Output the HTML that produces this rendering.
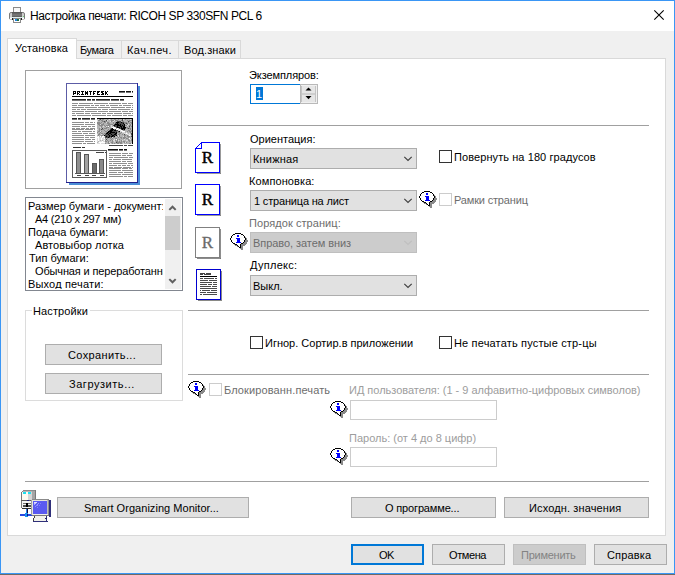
<!DOCTYPE html>
<html><head><meta charset="utf-8">
<style>
*{box-sizing:border-box;margin:0;padding:0}
html,body{width:675px;height:575px;overflow:hidden;background:#f0f0f0;font-family:"Liberation Sans",sans-serif;font-size:11px;color:#000;position:relative}
.a{position:absolute}
.t{position:absolute;white-space:nowrap;line-height:13px;height:13px}
.btn{position:absolute;background:#e1e1e1;border:1px solid #adadad}
.cmb{position:absolute;background:#e1e1e1;border:1px solid #adadad}
.chk{position:absolute;width:13px;height:13px;border:1px solid #333;background:#fff}
.chkd{position:absolute;width:13px;height:13px;border:1px solid #cccccc;background:#fff}
.sep{position:absolute;height:1px;background:#a0a0a0}
svg{position:absolute;overflow:visible}
</style></head><body>
<div class="a" style="left:1px;top:1px;width:673px;height:30px;background:#fff"></div>
<div class="a" style="left:0;top:0;width:675px;height:1px;background:#3a96f5"></div>
<div class="a" style="left:0;top:0;width:1px;height:574px;background:#3a96f5"></div>
<div class="a" style="left:674px;top:0;width:1px;height:574px;background:#3a96f5"></div>
<div class="a" style="left:0;top:573px;width:675px;height:1px;background:#3a96f5"></div>
<div class="a" style="left:0;top:574px;width:675px;height:1px;background:#6e6a66"></div>
<svg style="left:9px;top:7px" width="17" height="17" viewBox="0 0 17 17">
<defs><linearGradient id="pg" x1="0" y1="0" x2="0" y2="1"><stop offset="0" stop-color="#505050"/><stop offset="0.6" stop-color="#7c7c7c"/><stop offset="1" stop-color="#5a5a5a"/></linearGradient></defs>
<rect x="4.5" y="0.5" width="7" height="5.5" fill="#f8f8f8" stroke="#8a8a8a"/>
<rect x="0.5" y="5.5" width="15" height="7" rx="1.5" fill="#cfcfcf" stroke="#7a7a7a"/>
<rect x="3" y="5" width="10" height="5" fill="url(#pg)"/>
<rect x="14" y="9" width="1" height="1" fill="#70d070"/>
<rect x="1" y="10" width="14" height="1" fill="#e0eeee"/>
<rect x="1" y="11" width="14" height="1.5" fill="#fff"/>
<rect x="3" y="11" width="1" height="2" fill="#202020"/><rect x="12" y="11" width="1" height="2" fill="#202020"/>
<rect x="4.5" y="11.5" width="7" height="4" fill="#fff" stroke="#8a8a8a"/>
<rect x="6" y="12" width="2" height="2" fill="#2080e0"/><rect x="8" y="12" width="2" height="2" fill="#207040"/>
</svg>
<div class="t" style="left:30px;top:9px;letter-spacing:-0.421px;font-size:12px;line-height:14px;height:14px">Настройка печати: RICOH SP 330SFN PCL 6</div>
<svg style="left:654px;top:10px" width="11" height="11" viewBox="0 0 11 11"><path d="M0.3 0.3L9.7 9.7M9.7 0.3L0.3 9.7" stroke="#000" stroke-width="1.1"/></svg>
<div class="a" style="left:76px;top:40px;width:165px;height:19px;background:#f0f0f0;border:1px solid #d9d9d9"></div>
<div class="a" style="left:121px;top:40px;width:1px;height:18px;background:#d9d9d9"></div>
<div class="a" style="left:178px;top:40px;width:1px;height:18px;background:#d9d9d9"></div>
<div class="a" style="left:7px;top:58px;width:659px;height:478px;background:#fff;border:1px solid #d9d9d9"></div>
<div class="a" style="left:7px;top:38px;width:70px;height:21px;background:#fff;border:1px solid #d9d9d9;border-bottom:none"></div>
<div class="t" style="left:15px;top:42px;letter-spacing:0.125px">Установка</div>
<div class="t" style="left:80px;top:44px;letter-spacing:-0.4px">Бумага</div>
<div class="t" style="left:127px;top:44px;letter-spacing:0.429px">Кач.печ.</div>
<div class="t" style="left:184px;top:44px;letter-spacing:0.125px">Вод.знаки</div>
<div class="a" style="left:25px;top:70px;width:157px;height:119px;border:1px solid #a0a0a0;background:#fff"></div>
<svg style="left:66px;top:83px" width="75" height="103" viewBox="66 83 75 103" shape-rendering="crispEdges"><rect x="138" y="86" width="2" height="99" fill="#4a8ed6"/><rect x="69" y="183" width="71" height="2" fill="#4a8ed6"/><rect x="66" y="83" width="72" height="100" fill="#fff"/><rect x="66" y="83" width="72" height="1" fill="#5c5ca6"/><rect x="66" y="83" width="1" height="100" fill="#5c5ca6"/><rect x="137" y="83" width="1" height="100" fill="#25259a"/><rect x="66" y="182" width="72" height="1" fill="#20208c"/><rect x="73" y="91" width="1" height="1" fill="#000"/><rect x="74" y="91" width="1" height="1" fill="#000"/><rect x="75" y="91" width="1" height="1" fill="#000"/><rect x="73" y="92" width="1" height="1" fill="#000"/><rect x="75" y="92" width="1" height="1" fill="#000"/><rect x="73" y="93" width="1" height="1" fill="#000"/><rect x="74" y="93" width="1" height="1" fill="#000"/><rect x="75" y="93" width="1" height="1" fill="#000"/><rect x="73" y="94" width="1" height="1" fill="#000"/><rect x="77" y="91" width="1" height="1" fill="#000"/><rect x="78" y="91" width="1" height="1" fill="#000"/><rect x="79" y="91" width="1" height="1" fill="#000"/><rect x="77" y="92" width="1" height="1" fill="#000"/><rect x="79" y="92" width="1" height="1" fill="#000"/><rect x="77" y="93" width="1" height="1" fill="#000"/><rect x="78" y="93" width="1" height="1" fill="#000"/><rect x="77" y="94" width="1" height="1" fill="#000"/><rect x="79" y="94" width="1" height="1" fill="#000"/><rect x="81" y="91" width="1" height="1" fill="#000"/><rect x="82" y="91" width="1" height="1" fill="#000"/><rect x="83" y="91" width="1" height="1" fill="#000"/><rect x="82" y="92" width="1" height="1" fill="#000"/><rect x="82" y="93" width="1" height="1" fill="#000"/><rect x="81" y="94" width="1" height="1" fill="#000"/><rect x="82" y="94" width="1" height="1" fill="#000"/><rect x="83" y="94" width="1" height="1" fill="#000"/><rect x="85" y="91" width="1" height="1" fill="#000"/><rect x="87" y="91" width="1" height="1" fill="#000"/><rect x="85" y="92" width="1" height="1" fill="#000"/><rect x="86" y="92" width="1" height="1" fill="#000"/><rect x="87" y="92" width="1" height="1" fill="#000"/><rect x="85" y="93" width="1" height="1" fill="#000"/><rect x="86" y="93" width="1" height="1" fill="#000"/><rect x="87" y="93" width="1" height="1" fill="#000"/><rect x="85" y="94" width="1" height="1" fill="#000"/><rect x="87" y="94" width="1" height="1" fill="#000"/><rect x="89" y="91" width="1" height="1" fill="#000"/><rect x="90" y="91" width="1" height="1" fill="#000"/><rect x="91" y="91" width="1" height="1" fill="#000"/><rect x="90" y="92" width="1" height="1" fill="#000"/><rect x="90" y="93" width="1" height="1" fill="#000"/><rect x="90" y="94" width="1" height="1" fill="#000"/><rect x="93" y="91" width="1" height="1" fill="#000"/><rect x="94" y="91" width="1" height="1" fill="#000"/><rect x="95" y="91" width="1" height="1" fill="#000"/><rect x="93" y="92" width="1" height="1" fill="#000"/><rect x="93" y="93" width="1" height="1" fill="#000"/><rect x="94" y="93" width="1" height="1" fill="#000"/><rect x="93" y="94" width="1" height="1" fill="#000"/><rect x="97" y="91" width="1" height="1" fill="#000"/><rect x="98" y="91" width="1" height="1" fill="#000"/><rect x="99" y="91" width="1" height="1" fill="#000"/><rect x="97" y="92" width="1" height="1" fill="#000"/><rect x="98" y="92" width="1" height="1" fill="#000"/><rect x="97" y="93" width="1" height="1" fill="#000"/><rect x="97" y="94" width="1" height="1" fill="#000"/><rect x="98" y="94" width="1" height="1" fill="#000"/><rect x="99" y="94" width="1" height="1" fill="#000"/><rect x="101" y="91" width="1" height="1" fill="#000"/><rect x="102" y="91" width="1" height="1" fill="#000"/><rect x="103" y="91" width="1" height="1" fill="#000"/><rect x="101" y="92" width="1" height="1" fill="#000"/><rect x="102" y="92" width="1" height="1" fill="#000"/><rect x="102" y="93" width="1" height="1" fill="#000"/><rect x="103" y="93" width="1" height="1" fill="#000"/><rect x="101" y="94" width="1" height="1" fill="#000"/><rect x="102" y="94" width="1" height="1" fill="#000"/><rect x="103" y="94" width="1" height="1" fill="#000"/><rect x="105" y="91" width="1" height="1" fill="#000"/><rect x="107" y="91" width="1" height="1" fill="#000"/><rect x="105" y="92" width="1" height="1" fill="#000"/><rect x="106" y="92" width="1" height="1" fill="#000"/><rect x="105" y="93" width="1" height="1" fill="#000"/><rect x="106" y="93" width="1" height="1" fill="#000"/><rect x="105" y="94" width="1" height="1" fill="#000"/><rect x="107" y="94" width="1" height="1" fill="#000"/><rect x="119" y="91" width="6" height="1" fill="#111"/><rect x="119" y="92" width="6" height="1" fill="#777"/><rect x="126" y="91" width="5" height="1" fill="#111"/><rect x="126" y="92" width="5" height="1" fill="#777"/><rect x="132" y="91" width="1" height="1" fill="#111"/><rect x="132" y="92" width="1" height="1" fill="#777"/><rect x="72" y="96" width="61" height="1" fill="#000"/><rect x="72" y="99" width="14" height="1" fill="#222"/><rect x="72" y="100" width="14" height="1" fill="#777"/><rect x="87" y="99" width="4" height="1" fill="#222"/><rect x="87" y="100" width="4" height="1" fill="#777"/><rect x="92" y="99" width="3" height="1" fill="#222"/><rect x="92" y="100" width="3" height="1" fill="#777"/><rect x="96" y="99" width="14" height="1" fill="#222"/><rect x="96" y="100" width="14" height="1" fill="#777"/><rect x="111" y="99" width="8" height="1" fill="#222"/><rect x="111" y="100" width="8" height="1" fill="#777"/><rect x="120" y="99" width="4" height="1" fill="#222"/><rect x="120" y="100" width="4" height="1" fill="#777"/><rect x="72" y="103" width="6" height="1" fill="#8e8e8e"/><rect x="79" y="103" width="14" height="1" fill="#8e8e8e"/><rect x="94" y="103" width="14" height="1" fill="#8e8e8e"/><rect x="109" y="103" width="12" height="1" fill="#8e8e8e"/><rect x="122" y="103" width="5" height="1" fill="#8e8e8e"/><rect x="128" y="103" width="5" height="1" fill="#8e8e8e"/><rect x="72" y="105" width="5" height="1" fill="#8e8e8e"/><rect x="78" y="105" width="12" height="1" fill="#8e8e8e"/><rect x="91" y="105" width="3" height="1" fill="#8e8e8e"/><rect x="95" y="105" width="4" height="1" fill="#8e8e8e"/><rect x="100" y="105" width="5" height="1" fill="#8e8e8e"/><rect x="106" y="105" width="3" height="1" fill="#8e8e8e"/><rect x="110" y="105" width="8" height="1" fill="#8e8e8e"/><rect x="119" y="105" width="3" height="1" fill="#8e8e8e"/><rect x="123" y="105" width="8" height="1" fill="#8e8e8e"/><rect x="132" y="105" width="1" height="1" fill="#8e8e8e"/><rect x="72" y="107" width="12" height="1" fill="#8e8e8e"/><rect x="85" y="107" width="12" height="1" fill="#8e8e8e"/><rect x="98" y="107" width="12" height="1" fill="#8e8e8e"/><rect x="111" y="107" width="14" height="1" fill="#8e8e8e"/><rect x="126" y="107" width="5" height="1" fill="#8e8e8e"/><rect x="132" y="107" width="1" height="1" fill="#8e8e8e"/><rect x="72" y="109" width="4" height="1" fill="#8e8e8e"/><rect x="77" y="109" width="3" height="1" fill="#8e8e8e"/><rect x="81" y="109" width="5" height="1" fill="#8e8e8e"/><rect x="87" y="109" width="14" height="1" fill="#8e8e8e"/><rect x="102" y="109" width="6" height="1" fill="#8e8e8e"/><rect x="109" y="109" width="8" height="1" fill="#8e8e8e"/><rect x="118" y="109" width="12" height="1" fill="#8e8e8e"/><rect x="131" y="109" width="2" height="1" fill="#8e8e8e"/><rect x="72" y="111" width="12" height="1" fill="#8e8e8e"/><rect x="85" y="111" width="12" height="1" fill="#8e8e8e"/><rect x="98" y="111" width="10" height="1" fill="#8e8e8e"/><rect x="109" y="111" width="12" height="1" fill="#8e8e8e"/><rect x="122" y="111" width="6" height="1" fill="#8e8e8e"/><rect x="129" y="111" width="4" height="1" fill="#8e8e8e"/><rect x="72" y="113" width="3" height="1" fill="#8e8e8e"/><rect x="76" y="113" width="8" height="1" fill="#8e8e8e"/><rect x="85" y="113" width="5" height="1" fill="#8e8e8e"/><rect x="91" y="113" width="10" height="1" fill="#8e8e8e"/><rect x="102" y="113" width="4" height="1" fill="#8e8e8e"/><rect x="107" y="113" width="6" height="1" fill="#8e8e8e"/><rect x="114" y="113" width="8" height="1" fill="#8e8e8e"/><rect x="123" y="113" width="8" height="1" fill="#8e8e8e"/><rect x="132" y="113" width="1" height="1" fill="#8e8e8e"/><rect x="72" y="115" width="4" height="1" fill="#8e8e8e"/><rect x="77" y="115" width="14" height="1" fill="#8e8e8e"/><rect x="92" y="115" width="14" height="1" fill="#8e8e8e"/><rect x="107" y="115" width="4" height="1" fill="#8e8e8e"/><rect x="112" y="115" width="10" height="1" fill="#8e8e8e"/><rect x="123" y="115" width="4" height="1" fill="#8e8e8e"/><rect x="128" y="115" width="5" height="1" fill="#8e8e8e"/><rect x="72" y="118" width="5" height="1" fill="#222"/><rect x="72" y="119" width="5" height="1" fill="#777"/><rect x="78" y="118" width="3" height="1" fill="#222"/><rect x="78" y="119" width="3" height="1" fill="#777"/><rect x="82" y="118" width="8" height="1" fill="#222"/><rect x="82" y="119" width="8" height="1" fill="#777"/><rect x="91" y="118" width="4" height="1" fill="#222"/><rect x="91" y="119" width="4" height="1" fill="#777"/><rect x="72" y="122" width="12" height="1" fill="#8e8e8e"/><rect x="85" y="122" width="4" height="1" fill="#8e8e8e"/><rect x="90" y="122" width="3" height="1" fill="#8e8e8e"/><rect x="94" y="122" width="1" height="1" fill="#8e8e8e"/><rect x="72" y="124" width="12" height="1" fill="#8e8e8e"/><rect x="85" y="124" width="10" height="1" fill="#8e8e8e"/><rect x="72" y="126" width="8" height="1" fill="#8e8e8e"/><rect x="81" y="126" width="6" height="1" fill="#8e8e8e"/><rect x="88" y="126" width="3" height="1" fill="#8e8e8e"/><rect x="92" y="126" width="3" height="1" fill="#8e8e8e"/><rect x="72" y="128" width="3" height="1" fill="#8e8e8e"/><rect x="76" y="128" width="4" height="1" fill="#8e8e8e"/><rect x="81" y="128" width="4" height="1" fill="#8e8e8e"/><rect x="86" y="128" width="3" height="1" fill="#8e8e8e"/><rect x="90" y="128" width="5" height="1" fill="#8e8e8e"/><rect x="72" y="129" width="12" height="1" fill="#8e8e8e"/><rect x="85" y="129" width="8" height="1" fill="#8e8e8e"/><rect x="94" y="129" width="1" height="1" fill="#8e8e8e"/><rect x="72" y="131" width="5" height="1" fill="#8e8e8e"/><rect x="78" y="131" width="3" height="1" fill="#8e8e8e"/><rect x="82" y="131" width="10" height="1" fill="#8e8e8e"/><rect x="93" y="131" width="2" height="1" fill="#8e8e8e"/><rect x="72" y="133" width="10" height="1" fill="#8e8e8e"/><rect x="83" y="133" width="5" height="1" fill="#8e8e8e"/><rect x="89" y="133" width="6" height="1" fill="#8e8e8e"/><rect x="72" y="135" width="12" height="1" fill="#8e8e8e"/><rect x="85" y="135" width="10" height="1" fill="#8e8e8e"/><rect x="72" y="137" width="12" height="1" fill="#8e8e8e"/><rect x="85" y="137" width="4" height="1" fill="#8e8e8e"/><rect x="90" y="137" width="5" height="1" fill="#8e8e8e"/><rect x="72" y="139" width="12" height="1" fill="#8e8e8e"/><rect x="85" y="139" width="6" height="1" fill="#8e8e8e"/><rect x="92" y="139" width="3" height="1" fill="#8e8e8e"/><rect x="72" y="141" width="12" height="1" fill="#8e8e8e"/><rect x="85" y="141" width="8" height="1" fill="#8e8e8e"/><rect x="94" y="141" width="1" height="1" fill="#8e8e8e"/><rect x="72" y="143" width="10" height="1" fill="#8e8e8e"/><rect x="83" y="143" width="3" height="1" fill="#8e8e8e"/><rect x="87" y="143" width="8" height="1" fill="#8e8e8e"/><rect x="97" y="118" width="2" height="1" fill="#8a8a8a"/><rect x="99" y="118" width="1" height="1" fill="#b4b4b4"/><rect x="100" y="118" width="1" height="1" fill="#4a4a4a"/><rect x="101" y="118" width="1" height="1" fill="#b4b4b4"/><rect x="102" y="118" width="1" height="1" fill="#4a4a4a"/><rect x="103" y="118" width="3" height="1" fill="#b4b4b4"/><rect x="106" y="118" width="1" height="1" fill="#8a8a8a"/><rect x="107" y="118" width="1" height="1" fill="#b4b4b4"/><rect x="108" y="118" width="2" height="1" fill="#8a8a8a"/><rect x="110" y="118" width="1" height="1" fill="#b4b4b4"/><rect x="111" y="118" width="2" height="1" fill="#8a8a8a"/><rect x="113" y="118" width="2" height="1" fill="#b4b4b4"/><rect x="115" y="118" width="1" height="1" fill="#8a8a8a"/><rect x="116" y="118" width="1" height="1" fill="#dcdcdc"/><rect x="117" y="118" width="1" height="1" fill="#b4b4b4"/><rect x="118" y="118" width="1" height="1" fill="#8a8a8a"/><rect x="119" y="118" width="1" height="1" fill="#b4b4b4"/><rect x="120" y="118" width="3" height="1" fill="#8a8a8a"/><rect x="123" y="118" width="1" height="1" fill="#dcdcdc"/><rect x="124" y="118" width="3" height="1" fill="#b4b4b4"/><rect x="127" y="118" width="1" height="1" fill="#dcdcdc"/><rect x="128" y="118" width="2" height="1" fill="#8a8a8a"/><rect x="130" y="118" width="1" height="1" fill="#dcdcdc"/><rect x="131" y="118" width="2" height="1" fill="#8a8a8a"/><rect x="97" y="119" width="1" height="1" fill="#b4b4b4"/><rect x="98" y="119" width="1" height="1" fill="#dcdcdc"/><rect x="99" y="119" width="1" height="1" fill="#8a8a8a"/><rect x="100" y="119" width="1" height="1" fill="#4a4a4a"/><rect x="101" y="119" width="1" height="1" fill="#b4b4b4"/><rect x="102" y="119" width="2" height="1" fill="#8a8a8a"/><rect x="104" y="119" width="3" height="1" fill="#b4b4b4"/><rect x="107" y="119" width="1" height="1" fill="#8a8a8a"/><rect x="108" y="119" width="1" height="1" fill="#b4b4b4"/><rect x="109" y="119" width="1" height="1" fill="#dcdcdc"/><rect x="110" y="119" width="1" height="1" fill="#b4b4b4"/><rect x="111" y="119" width="1" height="1" fill="#8a8a8a"/><rect x="112" y="119" width="2" height="1" fill="#b4b4b4"/><rect x="114" y="119" width="2" height="1" fill="#8a8a8a"/><rect x="116" y="119" width="2" height="1" fill="#b4b4b4"/><rect x="118" y="119" width="1" height="1" fill="#8a8a8a"/><rect x="119" y="119" width="3" height="1" fill="#b4b4b4"/><rect x="122" y="119" width="1" height="1" fill="#4a4a4a"/><rect x="123" y="119" width="1" height="1" fill="#dcdcdc"/><rect x="124" y="119" width="1" height="1" fill="#b4b4b4"/><rect x="125" y="119" width="1" height="1" fill="#8a8a8a"/><rect x="126" y="119" width="4" height="1" fill="#b4b4b4"/><rect x="130" y="119" width="1" height="1" fill="#dcdcdc"/><rect x="131" y="119" width="1" height="1" fill="#b4b4b4"/><rect x="132" y="119" width="1" height="1" fill="#dcdcdc"/><rect x="97" y="120" width="1" height="1" fill="#dcdcdc"/><rect x="98" y="120" width="2" height="1" fill="#8a8a8a"/><rect x="100" y="120" width="1" height="1" fill="#b4b4b4"/><rect x="101" y="120" width="2" height="1" fill="#8a8a8a"/><rect x="103" y="120" width="3" height="1" fill="#b4b4b4"/><rect x="106" y="120" width="1" height="1" fill="#4a4a4a"/><rect x="107" y="120" width="1" height="1" fill="#dcdcdc"/><rect x="108" y="120" width="3" height="1" fill="#b4b4b4"/><rect x="111" y="120" width="3" height="1" fill="#8a8a8a"/><rect x="114" y="120" width="1" height="1" fill="#dcdcdc"/><rect x="115" y="120" width="3" height="1" fill="#8a8a8a"/><rect x="118" y="120" width="3" height="1" fill="#b4b4b4"/><rect x="121" y="120" width="1" height="1" fill="#8a8a8a"/><rect x="122" y="120" width="1" height="1" fill="#4a4a4a"/><rect x="123" y="120" width="4" height="1" fill="#b4b4b4"/><rect x="127" y="120" width="1" height="1" fill="#8a8a8a"/><rect x="128" y="120" width="1" height="1" fill="#b4b4b4"/><rect x="129" y="120" width="3" height="1" fill="#8a8a8a"/><rect x="132" y="120" width="1" height="1" fill="#b4b4b4"/><rect x="97" y="121" width="1" height="1" fill="#dcdcdc"/><rect x="98" y="121" width="4" height="1" fill="#b4b4b4"/><rect x="102" y="121" width="2" height="1" fill="#8a8a8a"/><rect x="104" y="121" width="1" height="1" fill="#4a4a4a"/><rect x="105" y="121" width="2" height="1" fill="#8a8a8a"/><rect x="107" y="121" width="3" height="1" fill="#b4b4b4"/><rect x="110" y="121" width="1" height="1" fill="#dcdcdc"/><rect x="111" y="121" width="1" height="1" fill="#8a8a8a"/><rect x="112" y="121" width="1" height="1" fill="#b4b4b4"/><rect x="113" y="121" width="1" height="1" fill="#dcdcdc"/><rect x="114" y="121" width="3" height="1" fill="#b4b4b4"/><rect x="117" y="121" width="4" height="1" fill="#4a4a4a"/><rect x="121" y="121" width="1" height="1" fill="#b4b4b4"/><rect x="122" y="121" width="2" height="1" fill="#8a8a8a"/><rect x="124" y="121" width="4" height="1" fill="#b4b4b4"/><rect x="128" y="121" width="1" height="1" fill="#4a4a4a"/><rect x="129" y="121" width="1" height="1" fill="#8a8a8a"/><rect x="130" y="121" width="2" height="1" fill="#b4b4b4"/><rect x="132" y="121" width="1" height="1" fill="#8a8a8a"/><rect x="97" y="122" width="3" height="1" fill="#8a8a8a"/><rect x="100" y="122" width="1" height="1" fill="#b4b4b4"/><rect x="101" y="122" width="1" height="1" fill="#8a8a8a"/><rect x="102" y="122" width="2" height="1" fill="#b4b4b4"/><rect x="104" y="122" width="2" height="1" fill="#8a8a8a"/><rect x="106" y="122" width="1" height="1" fill="#dcdcdc"/><rect x="107" y="122" width="2" height="1" fill="#8a8a8a"/><rect x="109" y="122" width="4" height="1" fill="#b4b4b4"/><rect x="113" y="122" width="1" height="1" fill="#8a8a8a"/><rect x="114" y="122" width="1" height="1" fill="#b4b4b4"/><rect x="115" y="122" width="1" height="1" fill="#8a8a8a"/><rect x="116" y="122" width="3" height="1" fill="#000000"/><rect x="119" y="122" width="2" height="1" fill="#4a4a4a"/><rect x="121" y="122" width="1" height="1" fill="#000000"/><rect x="122" y="122" width="2" height="1" fill="#4a4a4a"/><rect x="124" y="122" width="3" height="1" fill="#8a8a8a"/><rect x="127" y="122" width="1" height="1" fill="#b4b4b4"/><rect x="128" y="122" width="1" height="1" fill="#8a8a8a"/><rect x="129" y="122" width="1" height="1" fill="#b4b4b4"/><rect x="130" y="122" width="3" height="1" fill="#8a8a8a"/><rect x="97" y="123" width="4" height="1" fill="#8a8a8a"/><rect x="101" y="123" width="2" height="1" fill="#b4b4b4"/><rect x="103" y="123" width="1" height="1" fill="#8a8a8a"/><rect x="104" y="123" width="3" height="1" fill="#b4b4b4"/><rect x="107" y="123" width="3" height="1" fill="#8a8a8a"/><rect x="110" y="123" width="3" height="1" fill="#b4b4b4"/><rect x="113" y="123" width="1" height="1" fill="#8a8a8a"/><rect x="114" y="123" width="1" height="1" fill="#b4b4b4"/><rect x="115" y="123" width="2" height="1" fill="#4a4a4a"/><rect x="117" y="123" width="1" height="1" fill="#000000"/><rect x="118" y="123" width="5" height="1" fill="#4a4a4a"/><rect x="123" y="123" width="1" height="1" fill="#000000"/><rect x="124" y="123" width="2" height="1" fill="#8a8a8a"/><rect x="126" y="123" width="1" height="1" fill="#4a4a4a"/><rect x="127" y="123" width="1" height="1" fill="#8a8a8a"/><rect x="128" y="123" width="1" height="1" fill="#b4b4b4"/><rect x="129" y="123" width="1" height="1" fill="#8a8a8a"/><rect x="130" y="123" width="1" height="1" fill="#b4b4b4"/><rect x="131" y="123" width="2" height="1" fill="#8a8a8a"/><rect x="97" y="124" width="1" height="1" fill="#b4b4b4"/><rect x="98" y="124" width="2" height="1" fill="#8a8a8a"/><rect x="100" y="124" width="1" height="1" fill="#dcdcdc"/><rect x="101" y="124" width="3" height="1" fill="#8a8a8a"/><rect x="104" y="124" width="4" height="1" fill="#b4b4b4"/><rect x="108" y="124" width="5" height="1" fill="#8a8a8a"/><rect x="113" y="124" width="1" height="1" fill="#b4b4b4"/><rect x="114" y="124" width="1" height="1" fill="#4a4a4a"/><rect x="115" y="124" width="4" height="1" fill="#000000"/><rect x="119" y="124" width="1" height="1" fill="#4a4a4a"/><rect x="120" y="124" width="1" height="1" fill="#000000"/><rect x="121" y="124" width="3" height="1" fill="#4a4a4a"/><rect x="124" y="124" width="1" height="1" fill="#000000"/><rect x="125" y="124" width="2" height="1" fill="#b4b4b4"/><rect x="127" y="124" width="1" height="1" fill="#8a8a8a"/><rect x="128" y="124" width="1" height="1" fill="#dcdcdc"/><rect x="129" y="124" width="1" height="1" fill="#b4b4b4"/><rect x="130" y="124" width="1" height="1" fill="#8a8a8a"/><rect x="131" y="124" width="2" height="1" fill="#b4b4b4"/><rect x="97" y="125" width="2" height="1" fill="#b4b4b4"/><rect x="99" y="125" width="4" height="1" fill="#8a8a8a"/><rect x="103" y="125" width="1" height="1" fill="#b4b4b4"/><rect x="104" y="125" width="1" height="1" fill="#8a8a8a"/><rect x="105" y="125" width="1" height="1" fill="#b4b4b4"/><rect x="106" y="125" width="4" height="1" fill="#8a8a8a"/><rect x="110" y="125" width="1" height="1" fill="#b4b4b4"/><rect x="111" y="125" width="1" height="1" fill="#dcdcdc"/><rect x="112" y="125" width="1" height="1" fill="#b4b4b4"/><rect x="113" y="125" width="1" height="1" fill="#4a4a4a"/><rect x="114" y="125" width="1" height="1" fill="#000000"/><rect x="115" y="125" width="2" height="1" fill="#4a4a4a"/><rect x="117" y="125" width="4" height="1" fill="#000000"/><rect x="121" y="125" width="1" height="1" fill="#4a4a4a"/><rect x="122" y="125" width="1" height="1" fill="#000000"/><rect x="123" y="125" width="1" height="1" fill="#4a4a4a"/><rect x="124" y="125" width="1" height="1" fill="#000000"/><rect x="125" y="125" width="2" height="1" fill="#8a8a8a"/><rect x="127" y="125" width="1" height="1" fill="#dcdcdc"/><rect x="128" y="125" width="1" height="1" fill="#b4b4b4"/><rect x="129" y="125" width="2" height="1" fill="#8a8a8a"/><rect x="131" y="125" width="1" height="1" fill="#b4b4b4"/><rect x="132" y="125" width="1" height="1" fill="#8a8a8a"/><rect x="97" y="126" width="4" height="1" fill="#b4b4b4"/><rect x="101" y="126" width="1" height="1" fill="#8a8a8a"/><rect x="102" y="126" width="1" height="1" fill="#b4b4b4"/><rect x="103" y="126" width="1" height="1" fill="#dcdcdc"/><rect x="104" y="126" width="1" height="1" fill="#b4b4b4"/><rect x="105" y="126" width="1" height="1" fill="#8a8a8a"/><rect x="106" y="126" width="1" height="1" fill="#dcdcdc"/><rect x="107" y="126" width="1" height="1" fill="#b4b4b4"/><rect x="108" y="126" width="1" height="1" fill="#ffffff"/><rect x="109" y="126" width="1" height="1" fill="#8a8a8a"/><rect x="110" y="126" width="1" height="1" fill="#b4b4b4"/><rect x="111" y="126" width="1" height="1" fill="#dcdcdc"/><rect x="112" y="126" width="1" height="1" fill="#b4b4b4"/><rect x="113" y="126" width="1" height="1" fill="#dcdcdc"/><rect x="114" y="126" width="3" height="1" fill="#4a4a4a"/><rect x="117" y="126" width="1" height="1" fill="#000000"/><rect x="118" y="126" width="2" height="1" fill="#4a4a4a"/><rect x="120" y="126" width="2" height="1" fill="#000000"/><rect x="122" y="126" width="1" height="1" fill="#4a4a4a"/><rect x="123" y="126" width="2" height="1" fill="#000000"/><rect x="125" y="126" width="4" height="1" fill="#b4b4b4"/><rect x="129" y="126" width="1" height="1" fill="#4a4a4a"/><rect x="130" y="126" width="1" height="1" fill="#b4b4b4"/><rect x="131" y="126" width="2" height="1" fill="#8a8a8a"/><rect x="97" y="127" width="3" height="1" fill="#b4b4b4"/><rect x="100" y="127" width="1" height="1" fill="#dcdcdc"/><rect x="101" y="127" width="1" height="1" fill="#8a8a8a"/><rect x="102" y="127" width="4" height="1" fill="#b4b4b4"/><rect x="106" y="127" width="3" height="1" fill="#8a8a8a"/><rect x="109" y="127" width="2" height="1" fill="#b4b4b4"/><rect x="111" y="127" width="1" height="1" fill="#dcdcdc"/><rect x="112" y="127" width="3" height="1" fill="#ffffff"/><rect x="115" y="127" width="1" height="1" fill="#dcdcdc"/><rect x="116" y="127" width="1" height="1" fill="#4a4a4a"/><rect x="117" y="127" width="3" height="1" fill="#000000"/><rect x="120" y="127" width="1" height="1" fill="#4a4a4a"/><rect x="121" y="127" width="1" height="1" fill="#000000"/><rect x="122" y="127" width="1" height="1" fill="#4a4a4a"/><rect x="123" y="127" width="3" height="1" fill="#000000"/><rect x="126" y="127" width="2" height="1" fill="#8a8a8a"/><rect x="128" y="127" width="1" height="1" fill="#b4b4b4"/><rect x="129" y="127" width="1" height="1" fill="#8a8a8a"/><rect x="130" y="127" width="3" height="1" fill="#b4b4b4"/><rect x="97" y="128" width="2" height="1" fill="#b4b4b4"/><rect x="99" y="128" width="1" height="1" fill="#8a8a8a"/><rect x="100" y="128" width="2" height="1" fill="#b4b4b4"/><rect x="102" y="128" width="1" height="1" fill="#4a4a4a"/><rect x="103" y="128" width="1" height="1" fill="#b4b4b4"/><rect x="104" y="128" width="3" height="1" fill="#8a8a8a"/><rect x="107" y="128" width="3" height="1" fill="#b4b4b4"/><rect x="110" y="128" width="1" height="1" fill="#8a8a8a"/><rect x="111" y="128" width="1" height="1" fill="#4a4a4a"/><rect x="112" y="128" width="1" height="1" fill="#000000"/><rect x="113" y="128" width="3" height="1" fill="#ffffff"/><rect x="116" y="128" width="1" height="1" fill="#b4b4b4"/><rect x="117" y="128" width="1" height="1" fill="#ffffff"/><rect x="118" y="128" width="1" height="1" fill="#dcdcdc"/><rect x="119" y="128" width="2" height="1" fill="#4a4a4a"/><rect x="121" y="128" width="4" height="1" fill="#000000"/><rect x="125" y="128" width="1" height="1" fill="#4a4a4a"/><rect x="126" y="128" width="1" height="1" fill="#b4b4b4"/><rect x="127" y="128" width="1" height="1" fill="#8a8a8a"/><rect x="128" y="128" width="1" height="1" fill="#4a4a4a"/><rect x="129" y="128" width="2" height="1" fill="#8a8a8a"/><rect x="131" y="128" width="2" height="1" fill="#b4b4b4"/><rect x="97" y="129" width="1" height="1" fill="#dcdcdc"/><rect x="98" y="129" width="1" height="1" fill="#b4b4b4"/><rect x="99" y="129" width="1" height="1" fill="#8a8a8a"/><rect x="100" y="129" width="1" height="1" fill="#b4b4b4"/><rect x="101" y="129" width="1" height="1" fill="#4a4a4a"/><rect x="102" y="129" width="2" height="1" fill="#8a8a8a"/><rect x="104" y="129" width="4" height="1" fill="#b4b4b4"/><rect x="108" y="129" width="1" height="1" fill="#8a8a8a"/><rect x="109" y="129" width="1" height="1" fill="#b4b4b4"/><rect x="110" y="129" width="1" height="1" fill="#4a4a4a"/><rect x="111" y="129" width="3" height="1" fill="#000000"/><rect x="114" y="129" width="1" height="1" fill="#8a8a8a"/><rect x="115" y="129" width="1" height="1" fill="#4a4a4a"/><rect x="116" y="129" width="2" height="1" fill="#ffffff"/><rect x="118" y="129" width="1" height="1" fill="#dcdcdc"/><rect x="119" y="129" width="1" height="1" fill="#ffffff"/><rect x="120" y="129" width="1" height="1" fill="#dcdcdc"/><rect x="121" y="129" width="1" height="1" fill="#4a4a4a"/><rect x="122" y="129" width="1" height="1" fill="#000000"/><rect x="123" y="129" width="1" height="1" fill="#4a4a4a"/><rect x="124" y="129" width="1" height="1" fill="#000000"/><rect x="125" y="129" width="5" height="1" fill="#b4b4b4"/><rect x="130" y="129" width="1" height="1" fill="#8a8a8a"/><rect x="131" y="129" width="2" height="1" fill="#b4b4b4"/><rect x="97" y="130" width="2" height="1" fill="#b4b4b4"/><rect x="99" y="130" width="1" height="1" fill="#8a8a8a"/><rect x="100" y="130" width="4" height="1" fill="#b4b4b4"/><rect x="104" y="130" width="1" height="1" fill="#8a8a8a"/><rect x="105" y="130" width="2" height="1" fill="#b4b4b4"/><rect x="107" y="130" width="1" height="1" fill="#8a8a8a"/><rect x="108" y="130" width="1" height="1" fill="#b4b4b4"/><rect x="109" y="130" width="1" height="1" fill="#4a4a4a"/><rect x="110" y="130" width="3" height="1" fill="#000000"/><rect x="113" y="130" width="1" height="1" fill="#4a4a4a"/><rect x="114" y="130" width="2" height="1" fill="#000000"/><rect x="116" y="130" width="2" height="1" fill="#4a4a4a"/><rect x="118" y="130" width="3" height="1" fill="#dcdcdc"/><rect x="121" y="130" width="1" height="1" fill="#ffffff"/><rect x="122" y="130" width="1" height="1" fill="#dcdcdc"/><rect x="123" y="130" width="2" height="1" fill="#8a8a8a"/><rect x="125" y="130" width="3" height="1" fill="#b4b4b4"/><rect x="128" y="130" width="2" height="1" fill="#8a8a8a"/><rect x="130" y="130" width="1" height="1" fill="#b4b4b4"/><rect x="131" y="130" width="2" height="1" fill="#8a8a8a"/><rect x="97" y="131" width="1" height="1" fill="#b4b4b4"/><rect x="98" y="131" width="2" height="1" fill="#8a8a8a"/><rect x="100" y="131" width="1" height="1" fill="#dcdcdc"/><rect x="101" y="131" width="1" height="1" fill="#8a8a8a"/><rect x="102" y="131" width="3" height="1" fill="#b4b4b4"/><rect x="105" y="131" width="2" height="1" fill="#8a8a8a"/><rect x="107" y="131" width="1" height="1" fill="#b4b4b4"/><rect x="108" y="131" width="4" height="1" fill="#000000"/><rect x="112" y="131" width="5" height="1" fill="#4a4a4a"/><rect x="117" y="131" width="1" height="1" fill="#8a8a8a"/><rect x="118" y="131" width="1" height="1" fill="#4a4a4a"/><rect x="119" y="131" width="1" height="1" fill="#000000"/><rect x="120" y="131" width="2" height="1" fill="#dcdcdc"/><rect x="122" y="131" width="3" height="1" fill="#ffffff"/><rect x="125" y="131" width="2" height="1" fill="#b4b4b4"/><rect x="127" y="131" width="1" height="1" fill="#8a8a8a"/><rect x="128" y="131" width="1" height="1" fill="#b4b4b4"/><rect x="129" y="131" width="4" height="1" fill="#8a8a8a"/><rect x="97" y="132" width="1" height="1" fill="#8a8a8a"/><rect x="98" y="132" width="2" height="1" fill="#b4b4b4"/><rect x="100" y="132" width="1" height="1" fill="#8a8a8a"/><rect x="101" y="132" width="5" height="1" fill="#b4b4b4"/><rect x="106" y="132" width="1" height="1" fill="#8a8a8a"/><rect x="107" y="132" width="2" height="1" fill="#000000"/><rect x="109" y="132" width="1" height="1" fill="#4a4a4a"/><rect x="110" y="132" width="5" height="1" fill="#000000"/><rect x="115" y="132" width="1" height="1" fill="#4a4a4a"/><rect x="116" y="132" width="1" height="1" fill="#000000"/><rect x="117" y="132" width="3" height="1" fill="#8a8a8a"/><rect x="120" y="132" width="1" height="1" fill="#b4b4b4"/><rect x="121" y="132" width="1" height="1" fill="#8a8a8a"/><rect x="122" y="132" width="3" height="1" fill="#dcdcdc"/><rect x="125" y="132" width="1" height="1" fill="#b4b4b4"/><rect x="126" y="132" width="1" height="1" fill="#dcdcdc"/><rect x="127" y="132" width="3" height="1" fill="#b4b4b4"/><rect x="130" y="132" width="1" height="1" fill="#8a8a8a"/><rect x="131" y="132" width="1" height="1" fill="#b4b4b4"/><rect x="132" y="132" width="1" height="1" fill="#8a8a8a"/><rect x="97" y="133" width="2" height="1" fill="#b4b4b4"/><rect x="99" y="133" width="1" height="1" fill="#8a8a8a"/><rect x="100" y="133" width="1" height="1" fill="#b4b4b4"/><rect x="101" y="133" width="2" height="1" fill="#8a8a8a"/><rect x="103" y="133" width="1" height="1" fill="#b4b4b4"/><rect x="104" y="133" width="2" height="1" fill="#8a8a8a"/><rect x="106" y="133" width="2" height="1" fill="#000000"/><rect x="108" y="133" width="1" height="1" fill="#4a4a4a"/><rect x="109" y="133" width="2" height="1" fill="#000000"/><rect x="111" y="133" width="4" height="1" fill="#4a4a4a"/><rect x="115" y="133" width="2" height="1" fill="#000000"/><rect x="117" y="133" width="2" height="1" fill="#b4b4b4"/><rect x="119" y="133" width="2" height="1" fill="#8a8a8a"/><rect x="121" y="133" width="3" height="1" fill="#b4b4b4"/><rect x="124" y="133" width="2" height="1" fill="#dcdcdc"/><rect x="126" y="133" width="1" height="1" fill="#ffffff"/><rect x="127" y="133" width="1" height="1" fill="#dcdcdc"/><rect x="128" y="133" width="1" height="1" fill="#b4b4b4"/><rect x="129" y="133" width="1" height="1" fill="#dcdcdc"/><rect x="130" y="133" width="1" height="1" fill="#b4b4b4"/><rect x="131" y="133" width="1" height="1" fill="#4a4a4a"/><rect x="132" y="133" width="1" height="1" fill="#8a8a8a"/><rect x="97" y="134" width="1" height="1" fill="#dcdcdc"/><rect x="98" y="134" width="2" height="1" fill="#8a8a8a"/><rect x="100" y="134" width="1" height="1" fill="#b4b4b4"/><rect x="101" y="134" width="1" height="1" fill="#dcdcdc"/><rect x="102" y="134" width="1" height="1" fill="#b4b4b4"/><rect x="103" y="134" width="1" height="1" fill="#8a8a8a"/><rect x="104" y="134" width="1" height="1" fill="#b4b4b4"/><rect x="105" y="134" width="3" height="1" fill="#4a4a4a"/><rect x="108" y="134" width="1" height="1" fill="#000000"/><rect x="109" y="134" width="2" height="1" fill="#4a4a4a"/><rect x="111" y="134" width="1" height="1" fill="#000000"/><rect x="112" y="134" width="2" height="1" fill="#4a4a4a"/><rect x="114" y="134" width="2" height="1" fill="#000000"/><rect x="116" y="134" width="1" height="1" fill="#4a4a4a"/><rect x="117" y="134" width="1" height="1" fill="#b4b4b4"/><rect x="118" y="134" width="2" height="1" fill="#8a8a8a"/><rect x="120" y="134" width="2" height="1" fill="#b4b4b4"/><rect x="122" y="134" width="1" height="1" fill="#8a8a8a"/><rect x="123" y="134" width="1" height="1" fill="#b4b4b4"/><rect x="124" y="134" width="1" height="1" fill="#4a4a4a"/><rect x="125" y="134" width="2" height="1" fill="#b4b4b4"/><rect x="127" y="134" width="4" height="1" fill="#dcdcdc"/><rect x="131" y="134" width="1" height="1" fill="#4a4a4a"/><rect x="132" y="134" width="1" height="1" fill="#8a8a8a"/><rect x="97" y="135" width="1" height="1" fill="#b4b4b4"/><rect x="98" y="135" width="1" height="1" fill="#8a8a8a"/><rect x="99" y="135" width="2" height="1" fill="#b4b4b4"/><rect x="101" y="135" width="2" height="1" fill="#8a8a8a"/><rect x="103" y="135" width="1" height="1" fill="#b4b4b4"/><rect x="104" y="135" width="1" height="1" fill="#000000"/><rect x="105" y="135" width="4" height="1" fill="#4a4a4a"/><rect x="109" y="135" width="1" height="1" fill="#000000"/><rect x="110" y="135" width="2" height="1" fill="#4a4a4a"/><rect x="112" y="135" width="2" height="1" fill="#000000"/><rect x="114" y="135" width="2" height="1" fill="#4a4a4a"/><rect x="116" y="135" width="1" height="1" fill="#000000"/><rect x="117" y="135" width="1" height="1" fill="#b4b4b4"/><rect x="118" y="135" width="1" height="1" fill="#dcdcdc"/><rect x="119" y="135" width="1" height="1" fill="#8a8a8a"/><rect x="120" y="135" width="4" height="1" fill="#b4b4b4"/><rect x="124" y="135" width="2" height="1" fill="#8a8a8a"/><rect x="126" y="135" width="1" height="1" fill="#b4b4b4"/><rect x="127" y="135" width="1" height="1" fill="#8a8a8a"/><rect x="128" y="135" width="1" height="1" fill="#b4b4b4"/><rect x="129" y="135" width="1" height="1" fill="#ffffff"/><rect x="130" y="135" width="1" height="1" fill="#dcdcdc"/><rect x="131" y="135" width="2" height="1" fill="#8a8a8a"/><rect x="97" y="136" width="1" height="1" fill="#dcdcdc"/><rect x="98" y="136" width="1" height="1" fill="#ffffff"/><rect x="99" y="136" width="1" height="1" fill="#b4b4b4"/><rect x="100" y="136" width="1" height="1" fill="#ffffff"/><rect x="101" y="136" width="1" height="1" fill="#b4b4b4"/><rect x="102" y="136" width="2" height="1" fill="#ffffff"/><rect x="104" y="136" width="1" height="1" fill="#dcdcdc"/><rect x="105" y="136" width="1" height="1" fill="#4a4a4a"/><rect x="106" y="136" width="1" height="1" fill="#000000"/><rect x="107" y="136" width="2" height="1" fill="#4a4a4a"/><rect x="109" y="136" width="1" height="1" fill="#000000"/><rect x="110" y="136" width="1" height="1" fill="#4a4a4a"/><rect x="111" y="136" width="2" height="1" fill="#000000"/><rect x="113" y="136" width="1" height="1" fill="#4a4a4a"/><rect x="114" y="136" width="1" height="1" fill="#000000"/><rect x="115" y="136" width="2" height="1" fill="#b4b4b4"/><rect x="117" y="136" width="1" height="1" fill="#8a8a8a"/><rect x="118" y="136" width="1" height="1" fill="#dcdcdc"/><rect x="119" y="136" width="1" height="1" fill="#8a8a8a"/><rect x="120" y="136" width="3" height="1" fill="#b4b4b4"/><rect x="123" y="136" width="1" height="1" fill="#dcdcdc"/><rect x="124" y="136" width="1" height="1" fill="#8a8a8a"/><rect x="125" y="136" width="2" height="1" fill="#b4b4b4"/><rect x="127" y="136" width="3" height="1" fill="#8a8a8a"/><rect x="130" y="136" width="1" height="1" fill="#b4b4b4"/><rect x="131" y="136" width="1" height="1" fill="#4a4a4a"/><rect x="132" y="136" width="1" height="1" fill="#8a8a8a"/><rect x="97" y="137" width="2" height="1" fill="#ffffff"/><rect x="99" y="137" width="3" height="1" fill="#dcdcdc"/><rect x="102" y="137" width="1" height="1" fill="#ffffff"/><rect x="103" y="137" width="2" height="1" fill="#dcdcdc"/><rect x="105" y="137" width="3" height="1" fill="#4a4a4a"/><rect x="108" y="137" width="1" height="1" fill="#000000"/><rect x="109" y="137" width="1" height="1" fill="#4a4a4a"/><rect x="110" y="137" width="1" height="1" fill="#8a8a8a"/><rect x="111" y="137" width="1" height="1" fill="#4a4a4a"/><rect x="112" y="137" width="1" height="1" fill="#dcdcdc"/><rect x="113" y="137" width="2" height="1" fill="#8a8a8a"/><rect x="115" y="137" width="3" height="1" fill="#b4b4b4"/><rect x="118" y="137" width="1" height="1" fill="#8a8a8a"/><rect x="119" y="137" width="1" height="1" fill="#b4b4b4"/><rect x="120" y="137" width="2" height="1" fill="#8a8a8a"/><rect x="122" y="137" width="1" height="1" fill="#b4b4b4"/><rect x="123" y="137" width="3" height="1" fill="#8a8a8a"/><rect x="126" y="137" width="2" height="1" fill="#b4b4b4"/><rect x="128" y="137" width="1" height="1" fill="#8a8a8a"/><rect x="129" y="137" width="4" height="1" fill="#b4b4b4"/><rect x="97" y="138" width="1" height="1" fill="#dcdcdc"/><rect x="98" y="138" width="1" height="1" fill="#ffffff"/><rect x="99" y="138" width="2" height="1" fill="#dcdcdc"/><rect x="101" y="138" width="1" height="1" fill="#ffffff"/><rect x="102" y="138" width="2" height="1" fill="#dcdcdc"/><rect x="104" y="138" width="1" height="1" fill="#ffffff"/><rect x="105" y="138" width="1" height="1" fill="#8a8a8a"/><rect x="106" y="138" width="1" height="1" fill="#b4b4b4"/><rect x="107" y="138" width="1" height="1" fill="#8a8a8a"/><rect x="108" y="138" width="2" height="1" fill="#b4b4b4"/><rect x="110" y="138" width="1" height="1" fill="#8a8a8a"/><rect x="111" y="138" width="1" height="1" fill="#b4b4b4"/><rect x="112" y="138" width="1" height="1" fill="#8a8a8a"/><rect x="113" y="138" width="2" height="1" fill="#b4b4b4"/><rect x="115" y="138" width="2" height="1" fill="#8a8a8a"/><rect x="117" y="138" width="4" height="1" fill="#b4b4b4"/><rect x="121" y="138" width="1" height="1" fill="#8a8a8a"/><rect x="122" y="138" width="1" height="1" fill="#b4b4b4"/><rect x="123" y="138" width="2" height="1" fill="#8a8a8a"/><rect x="125" y="138" width="1" height="1" fill="#b4b4b4"/><rect x="126" y="138" width="2" height="1" fill="#8a8a8a"/><rect x="128" y="138" width="1" height="1" fill="#b4b4b4"/><rect x="129" y="138" width="1" height="1" fill="#ffffff"/><rect x="130" y="138" width="3" height="1" fill="#b4b4b4"/><rect x="97" y="139" width="1" height="1" fill="#dcdcdc"/><rect x="98" y="139" width="1" height="1" fill="#ffffff"/><rect x="99" y="139" width="2" height="1" fill="#dcdcdc"/><rect x="101" y="139" width="1" height="1" fill="#ffffff"/><rect x="102" y="139" width="3" height="1" fill="#dcdcdc"/><rect x="105" y="139" width="1" height="1" fill="#b4b4b4"/><rect x="106" y="139" width="1" height="1" fill="#4a4a4a"/><rect x="107" y="139" width="4" height="1" fill="#b4b4b4"/><rect x="111" y="139" width="1" height="1" fill="#8a8a8a"/><rect x="112" y="139" width="2" height="1" fill="#b4b4b4"/><rect x="114" y="139" width="1" height="1" fill="#dcdcdc"/><rect x="115" y="139" width="1" height="1" fill="#b4b4b4"/><rect x="116" y="139" width="1" height="1" fill="#ffffff"/><rect x="117" y="139" width="1" height="1" fill="#8a8a8a"/><rect x="118" y="139" width="1" height="1" fill="#b4b4b4"/><rect x="119" y="139" width="1" height="1" fill="#8a8a8a"/><rect x="120" y="139" width="4" height="1" fill="#b4b4b4"/><rect x="124" y="139" width="1" height="1" fill="#dcdcdc"/><rect x="125" y="139" width="3" height="1" fill="#b4b4b4"/><rect x="128" y="139" width="1" height="1" fill="#8a8a8a"/><rect x="129" y="139" width="1" height="1" fill="#b4b4b4"/><rect x="130" y="139" width="1" height="1" fill="#dcdcdc"/><rect x="131" y="139" width="1" height="1" fill="#8a8a8a"/><rect x="132" y="139" width="1" height="1" fill="#b4b4b4"/><rect x="97" y="140" width="1" height="1" fill="#dcdcdc"/><rect x="98" y="140" width="1" height="1" fill="#ffffff"/><rect x="99" y="140" width="1" height="1" fill="#dcdcdc"/><rect x="100" y="140" width="1" height="1" fill="#b4b4b4"/><rect x="101" y="140" width="1" height="1" fill="#dcdcdc"/><rect x="102" y="140" width="1" height="1" fill="#b4b4b4"/><rect x="103" y="140" width="1" height="1" fill="#dcdcdc"/><rect x="104" y="140" width="1" height="1" fill="#ffffff"/><rect x="105" y="140" width="1" height="1" fill="#8a8a8a"/><rect x="106" y="140" width="1" height="1" fill="#b4b4b4"/><rect x="107" y="140" width="1" height="1" fill="#8a8a8a"/><rect x="108" y="140" width="2" height="1" fill="#b4b4b4"/><rect x="110" y="140" width="1" height="1" fill="#8a8a8a"/><rect x="111" y="140" width="1" height="1" fill="#b4b4b4"/><rect x="112" y="140" width="1" height="1" fill="#8a8a8a"/><rect x="113" y="140" width="2" height="1" fill="#dcdcdc"/><rect x="115" y="140" width="1" height="1" fill="#8a8a8a"/><rect x="116" y="140" width="1" height="1" fill="#b4b4b4"/><rect x="117" y="140" width="1" height="1" fill="#8a8a8a"/><rect x="118" y="140" width="1" height="1" fill="#dcdcdc"/><rect x="119" y="140" width="2" height="1" fill="#b4b4b4"/><rect x="121" y="140" width="1" height="1" fill="#8a8a8a"/><rect x="122" y="140" width="1" height="1" fill="#dcdcdc"/><rect x="123" y="140" width="3" height="1" fill="#b4b4b4"/><rect x="126" y="140" width="2" height="1" fill="#dcdcdc"/><rect x="128" y="140" width="2" height="1" fill="#8a8a8a"/><rect x="130" y="140" width="1" height="1" fill="#b4b4b4"/><rect x="131" y="140" width="1" height="1" fill="#8a8a8a"/><rect x="132" y="140" width="1" height="1" fill="#b4b4b4"/><rect x="97" y="141" width="1" height="1" fill="#dcdcdc"/><rect x="98" y="141" width="1" height="1" fill="#b4b4b4"/><rect x="99" y="141" width="3" height="1" fill="#dcdcdc"/><rect x="102" y="141" width="1" height="1" fill="#ffffff"/><rect x="103" y="141" width="2" height="1" fill="#dcdcdc"/><rect x="105" y="141" width="2" height="1" fill="#8a8a8a"/><rect x="107" y="141" width="1" height="1" fill="#b4b4b4"/><rect x="108" y="141" width="1" height="1" fill="#8a8a8a"/><rect x="109" y="141" width="3" height="1" fill="#b4b4b4"/><rect x="112" y="141" width="1" height="1" fill="#8a8a8a"/><rect x="113" y="141" width="1" height="1" fill="#b4b4b4"/><rect x="114" y="141" width="1" height="1" fill="#dcdcdc"/><rect x="115" y="141" width="1" height="1" fill="#b4b4b4"/><rect x="116" y="141" width="2" height="1" fill="#8a8a8a"/><rect x="118" y="141" width="1" height="1" fill="#b4b4b4"/><rect x="119" y="141" width="1" height="1" fill="#8a8a8a"/><rect x="120" y="141" width="1" height="1" fill="#b4b4b4"/><rect x="121" y="141" width="1" height="1" fill="#8a8a8a"/><rect x="122" y="141" width="1" height="1" fill="#b4b4b4"/><rect x="123" y="141" width="2" height="1" fill="#8a8a8a"/><rect x="125" y="141" width="4" height="1" fill="#b4b4b4"/><rect x="129" y="141" width="1" height="1" fill="#8a8a8a"/><rect x="130" y="141" width="3" height="1" fill="#b4b4b4"/><rect x="97" y="142" width="1" height="1" fill="#b4b4b4"/><rect x="98" y="142" width="1" height="1" fill="#dcdcdc"/><rect x="99" y="142" width="6" height="1" fill="#ffffff"/><rect x="105" y="142" width="3" height="1" fill="#b4b4b4"/><rect x="108" y="142" width="1" height="1" fill="#8a8a8a"/><rect x="109" y="142" width="1" height="1" fill="#dcdcdc"/><rect x="110" y="142" width="1" height="1" fill="#b4b4b4"/><rect x="111" y="142" width="2" height="1" fill="#8a8a8a"/><rect x="113" y="142" width="3" height="1" fill="#b4b4b4"/><rect x="116" y="142" width="1" height="1" fill="#4a4a4a"/><rect x="117" y="142" width="5" height="1" fill="#8a8a8a"/><rect x="122" y="142" width="2" height="1" fill="#b4b4b4"/><rect x="124" y="142" width="1" height="1" fill="#8a8a8a"/><rect x="125" y="142" width="1" height="1" fill="#dcdcdc"/><rect x="126" y="142" width="1" height="1" fill="#8a8a8a"/><rect x="127" y="142" width="5" height="1" fill="#b4b4b4"/><rect x="132" y="142" width="1" height="1" fill="#8a8a8a"/><rect x="97" y="143" width="3" height="1" fill="#dcdcdc"/><rect x="100" y="143" width="1" height="1" fill="#ffffff"/><rect x="101" y="143" width="4" height="1" fill="#dcdcdc"/><rect x="105" y="143" width="1" height="1" fill="#8a8a8a"/><rect x="106" y="143" width="2" height="1" fill="#b4b4b4"/><rect x="108" y="143" width="2" height="1" fill="#8a8a8a"/><rect x="110" y="143" width="1" height="1" fill="#dcdcdc"/><rect x="111" y="143" width="1" height="1" fill="#b4b4b4"/><rect x="112" y="143" width="1" height="1" fill="#8a8a8a"/><rect x="113" y="143" width="1" height="1" fill="#b4b4b4"/><rect x="114" y="143" width="1" height="1" fill="#8a8a8a"/><rect x="115" y="143" width="2" height="1" fill="#b4b4b4"/><rect x="117" y="143" width="2" height="1" fill="#8a8a8a"/><rect x="119" y="143" width="1" height="1" fill="#b4b4b4"/><rect x="120" y="143" width="2" height="1" fill="#8a8a8a"/><rect x="122" y="143" width="1" height="1" fill="#b4b4b4"/><rect x="123" y="143" width="1" height="1" fill="#dcdcdc"/><rect x="124" y="143" width="5" height="1" fill="#b4b4b4"/><rect x="129" y="143" width="2" height="1" fill="#8a8a8a"/><rect x="131" y="143" width="1" height="1" fill="#dcdcdc"/><rect x="132" y="143" width="1" height="1" fill="#8a8a8a"/><rect x="97" y="118" width="36" height="1" fill="#000"/><rect x="132" y="118" width="1" height="26" fill="#000"/><rect x="109" y="145" width="14" height="1" fill="#444"/><rect x="124" y="145" width="3" height="1" fill="#444"/><rect x="128" y="145" width="5" height="1" fill="#444"/><rect x="73" y="147" width="8" height="1" fill="#333"/><rect x="82" y="147" width="3" height="1" fill="#333"/><rect x="72.5" y="150.5" width="34" height="27" fill="#fff" stroke="#5a5a5a" stroke-width="1"/><rect x="75" y="173" width="30" height="1" fill="#5a5a5a"/><rect x="76.5" y="152.5" width="4" height="21" fill="#8e8e8e" stroke="#555" stroke-width="1"/><rect x="84.5" y="154.5" width="4" height="19" fill="#a2a2a2" stroke="#555" stroke-width="1"/><rect x="92.5" y="163.5" width="4" height="10" fill="#6a6a6a" stroke="#555" stroke-width="1"/><rect x="99.5" y="159.5" width="4" height="14" fill="#888888" stroke="#555" stroke-width="1"/><rect x="96" y="152" width="8" height="1" fill="#444"/><rect x="105" y="152" width="1" height="1" fill="#444"/><rect x="77" y="175" width="4" height="1" fill="#444"/><rect x="85" y="175" width="4" height="1" fill="#444"/><rect x="92" y="175" width="4" height="1" fill="#444"/><rect x="100" y="175" width="4" height="1" fill="#444"/><rect x="108" y="149" width="10" height="1" fill="#111"/><rect x="108" y="150" width="10" height="1" fill="#777"/><rect x="119" y="149" width="4" height="1" fill="#111"/><rect x="119" y="150" width="4" height="1" fill="#777"/><rect x="124" y="149" width="3" height="1" fill="#111"/><rect x="124" y="150" width="3" height="1" fill="#777"/><rect x="109" y="153" width="12" height="1" fill="#8e8e8e"/><rect x="122" y="153" width="6" height="1" fill="#8e8e8e"/><rect x="129" y="153" width="4" height="1" fill="#8e8e8e"/><rect x="109" y="155" width="12" height="1" fill="#8e8e8e"/><rect x="122" y="155" width="4" height="1" fill="#8e8e8e"/><rect x="127" y="155" width="5" height="1" fill="#8e8e8e"/><rect x="109" y="157" width="4" height="1" fill="#8e8e8e"/><rect x="114" y="157" width="14" height="1" fill="#8e8e8e"/><rect x="129" y="157" width="4" height="1" fill="#8e8e8e"/><rect x="109" y="159" width="3" height="1" fill="#8e8e8e"/><rect x="113" y="159" width="8" height="1" fill="#8e8e8e"/><rect x="122" y="159" width="10" height="1" fill="#8e8e8e"/><rect x="109" y="161" width="12" height="1" fill="#8e8e8e"/><rect x="122" y="161" width="4" height="1" fill="#8e8e8e"/><rect x="127" y="161" width="5" height="1" fill="#8e8e8e"/><rect x="109" y="163" width="3" height="1" fill="#8e8e8e"/><rect x="113" y="163" width="14" height="1" fill="#8e8e8e"/><rect x="128" y="163" width="5" height="1" fill="#8e8e8e"/><rect x="109" y="165" width="8" height="1" fill="#8e8e8e"/><rect x="118" y="165" width="3" height="1" fill="#8e8e8e"/><rect x="122" y="165" width="4" height="1" fill="#8e8e8e"/><rect x="127" y="165" width="3" height="1" fill="#8e8e8e"/><rect x="131" y="165" width="2" height="1" fill="#8e8e8e"/><rect x="109" y="167" width="4" height="1" fill="#8e8e8e"/><rect x="114" y="167" width="8" height="1" fill="#8e8e8e"/><rect x="123" y="167" width="8" height="1" fill="#8e8e8e"/><rect x="132" y="167" width="1" height="1" fill="#8e8e8e"/><rect x="109" y="168" width="12" height="1" fill="#8e8e8e"/><rect x="122" y="168" width="6" height="1" fill="#8e8e8e"/><rect x="129" y="168" width="3" height="1" fill="#8e8e8e"/><rect x="109" y="170" width="12" height="1" fill="#8e8e8e"/><rect x="122" y="170" width="11" height="1" fill="#8e8e8e"/><rect x="109" y="172" width="8" height="1" fill="#8e8e8e"/><rect x="118" y="172" width="5" height="1" fill="#8e8e8e"/><rect x="124" y="172" width="9" height="1" fill="#8e8e8e"/><rect x="109" y="174" width="12" height="1" fill="#8e8e8e"/><rect x="122" y="174" width="11" height="1" fill="#8e8e8e"/><rect x="109" y="176" width="14" height="1" fill="#8e8e8e"/><rect x="124" y="176" width="3" height="1" fill="#8e8e8e"/><rect x="128" y="176" width="5" height="1" fill="#8e8e8e"/></svg>
<div class="a" style="left:25px;top:197px;width:158px;height:94px;border:1px solid #828790;background:#fff"></div>
<div class="a" style="left:26px;top:198px;width:137px;height:91px;overflow:hidden">
<div class="t" style="left:2px;top:2px;letter-spacing:0.0px">Размер бумаги - документ:</div>
<div class="t" style="left:9px;top:15px;letter-spacing:-0.25px">A4 (210 x 297 мм)</div>
<div class="t" style="left:2px;top:28px;letter-spacing:0.077px">Подача бумаги:</div>
<div class="t" style="left:9px;top:41px;letter-spacing:0.071px">Автовыбор лотка</div>
<div class="t" style="left:3px;top:54px;letter-spacing:0.0px">Тип бумаги:</div>
<div class="t" style="left:9px;top:67px;letter-spacing:-0.143px">Обычная и переработанная</div>
<div class="t" style="left:2px;top:80px;letter-spacing:0.167px">Выход печати:</div>
</div>
<div class="a" style="left:165px;top:199px;width:16px;height:90px;background:#f0f0f0"></div>
<div class="a" style="left:165px;top:216px;width:15px;height:34px;background:#cdcdcd"></div>
<svg style="left:168px;top:205px" width="9" height="6" viewBox="0 0 9 6"><path d="M1.3 4.9L4.5 1.7L7.7 4.9" fill="none" stroke="#606060" stroke-width="2"/></svg>
<svg style="left:168px;top:278px" width="9" height="6" viewBox="0 0 9 6"><path d="M1.3 1.1L4.5 4.3L7.7 1.1" fill="none" stroke="#606060" stroke-width="2"/></svg>
<div class="a" style="left:25px;top:310px;width:158px;height:91px;border:1px solid #dcdcdc"></div>
<div class="a" style="left:32px;top:304px;width:58px;height:12px;background:#fff"></div>
<div class="t" style="left:33px;top:305px;letter-spacing:0.125px">Настройки</div>
<div class="btn" style="left:45px;top:344px;width:117px;height:21px"></div>
<div class="t" style="left:68px;top:349px;letter-spacing:0.364px">Сохранить...</div>
<div class="btn" style="left:45px;top:373px;width:117px;height:21px"></div>
<div class="t" style="left:69px;top:378px;letter-spacing:0.545px">Загрузить...</div>
<div class="sep" style="left:188px;top:125px;width:461px"></div>
<div class="sep" style="left:188px;top:310px;width:461px"></div>
<div class="sep" style="left:188px;top:374px;width:461px"></div>
<div class="sep" style="left:25px;top:481px;width:624px"></div>
<div class="t" style="left:249px;top:69px;letter-spacing:-0.091px">Экземпляров:</div>
<div class="a" style="left:250px;top:84px;width:50px;height:20px;border:1px solid #0078d7;border-right:none;background:#fff"></div>
<div class="a" style="left:256px;top:87px;width:7px;height:13px;background:#0078d7"></div>
<div class="t" style="left:256px;top:88px;color:#fff">1</div>
<svg style="left:300px;top:84px" width="18" height="20" viewBox="0 0 18 20" shape-rendering="crispEdges">
<rect x="0" y="0" width="18" height="20" fill="#b9b9b9"/>
<rect x="1" y="1" width="16" height="18" fill="#f0f0f0"/>
<rect x="1" y="2" width="1" height="16" fill="#c4c4c4"/><rect x="15" y="2" width="1" height="16" fill="#c4c4c4"/>
<rect x="2" y="2" width="13" height="7" fill="#e6e6e6"/>
<rect x="2" y="9" width="13" height="2" fill="#cfcfcf"/>
<rect x="2" y="11" width="13" height="7" fill="#e6e6e6"/>
<path d="M5.5 6.6H11.5L8.5 3.4Z" fill="#000" shape-rendering="auto"/>
<path d="M5.5 12H11.5L8.5 15.2Z" fill="#000" shape-rendering="auto"/>
</svg>
<svg style="left:195px;top:142px" width="27" height="33" viewBox="0 0 27 33" shape-rendering="crispEdges"><rect x="25" y="2" width="1" height="30" fill="#808080" opacity="0.8"/><rect x="2" y="31" width="24" height="1" fill="#808080" opacity="0.8"/><path d="M6 0H25V31H0V6Z" fill="#fff"/><rect x="6" y="0" width="19" height="1" fill="#0000ff"/><rect x="24" y="0" width="1" height="31" fill="#0000ff"/><rect x="0" y="30" width="25" height="1" fill="#0000ff"/><rect x="0" y="6" width="1" height="25" fill="#0000ff"/><rect x="6" y="0" width="1" height="7" fill="#0000ff"/><rect x="0" y="6" width="7" height="1" fill="#0000ff"/><rect x="5" y="1" width="1" height="1" fill="#0000ff"/><rect x="4" y="2" width="1" height="1" fill="#0000ff"/><rect x="3" y="3" width="1" height="1" fill="#0000ff"/><rect x="2" y="4" width="1" height="1" fill="#0000ff"/><rect x="1" y="5" width="1" height="1" fill="#0000ff"/><text x="12.5" y="21" text-anchor="middle" font-family="Liberation Serif" font-size="17" font-weight="normal" fill="#000" stroke="#000" stroke-width="0.45" shape-rendering="auto">R</text></svg>
<svg style="left:195px;top:184px" width="27" height="33" viewBox="0 0 27 33" shape-rendering="crispEdges"><rect x="25" y="2" width="1" height="30" fill="#808080" opacity="0.8"/><rect x="2" y="31" width="24" height="1" fill="#808080" opacity="0.8"/><rect x="0" y="0" width="25" height="31" fill="#0000ff"/><rect x="1" y="1" width="23" height="29" fill="#fff"/><text x="12.5" y="21" text-anchor="middle" font-family="Liberation Serif" font-size="17" font-weight="normal" fill="#000" stroke="#000" stroke-width="0.45" shape-rendering="auto">R</text></svg>
<svg style="left:195px;top:227px" width="27" height="33" viewBox="0 0 27 33" shape-rendering="crispEdges"><rect x="25" y="2" width="1" height="30" fill="#707070" opacity="0.8"/><rect x="2" y="31" width="24" height="1" fill="#707070" opacity="0.8"/><rect x="0" y="0" width="25" height="31" fill="#808080"/><rect x="1" y="1" width="23" height="29" fill="#fff"/><text x="12.5" y="21" text-anchor="middle" font-family="Liberation Serif" font-size="17" font-weight="normal" fill="#6a6a6a" stroke="#6a6a6a" stroke-width="0.3" shape-rendering="auto">R</text></svg>
<svg style="left:196px;top:269px" width="26" height="32" viewBox="196 269 26 32" shape-rendering="crispEdges"><rect x="198" y="271" width="24" height="30" fill="#8a8a86"/><rect x="196" y="269" width="25" height="31" fill="#0000d0"/><rect x="197" y="270" width="23" height="29" fill="#fff"/><rect x="200" y="273" width="3" height="2" fill="#444"/><rect x="203" y="273" width="2" height="1" fill="#444"/><rect x="204" y="274" width="2" height="1" fill="#444"/><rect x="206" y="273" width="2" height="2" fill="#444"/><rect x="208" y="273" width="3" height="2" fill="#444"/><rect x="200" y="276" width="17" height="1" fill="#000"/><rect x="200" y="278" width="3" height="1" fill="#4a4a4a"/><rect x="204" y="278" width="10" height="1" fill="#4a4a4a"/><rect x="215" y="278" width="2" height="1" fill="#4a4a4a"/><rect x="200" y="280" width="8" height="1" fill="#4a4a4a"/><rect x="209" y="280" width="8" height="1" fill="#4a4a4a"/><rect x="200" y="282" width="12" height="1" fill="#4a4a4a"/><rect x="213" y="282" width="4" height="1" fill="#4a4a4a"/><rect x="200" y="284" width="7" height="1" fill="#4a4a4a"/><rect x="208" y="284" width="4" height="1" fill="#4a4a4a"/><rect x="213" y="284" width="4" height="1" fill="#4a4a4a"/><rect x="200" y="286" width="11" height="1" fill="#4a4a4a"/><rect x="212" y="286" width="5" height="1" fill="#4a4a4a"/><rect x="200" y="288" width="17" height="1" fill="#4a4a4a"/><rect x="200" y="290" width="1" height="1" fill="#4a4a4a"/><rect x="202" y="290" width="8" height="1" fill="#4a4a4a"/><rect x="211" y="290" width="6" height="1" fill="#4a4a4a"/><rect x="200" y="292" width="6" height="1" fill="#4a4a4a"/><rect x="207" y="292" width="10" height="1" fill="#4a4a4a"/><rect x="200" y="294" width="2" height="1" fill="#4a4a4a"/><rect x="203" y="294" width="14" height="1" fill="#4a4a4a"/></svg>
<div class="t" style="left:250px;top:133px;letter-spacing:0.0px">Ориентация:</div>
<div class="cmb" style="left:250px;top:148px;width:167px;height:21px"></div>
<div class="t" style="left:253px;top:153px;letter-spacing:0.167px">Книжная</div>
<svg style="left:404px;top:156px" width="9" height="6" viewBox="0 0 9 6"><path d="M0.3 0.9L4 4.4L7.7 0.9" fill="none" stroke="#404040" stroke-width="1.2"/></svg>
<div class="chk" style="left:439px;top:150px"></div>
<div class="t" style="left:454px;top:151px;letter-spacing:0.083px">Повернуть на 180 градусов</div>
<div class="t" style="left:249px;top:175px;letter-spacing:0.1px">Компоновка:</div>
<div class="cmb" style="left:250px;top:190px;width:167px;height:21px"></div>
<div class="t" style="left:254px;top:195px;letter-spacing:-0.176px">1 страница на лист</div>
<svg style="left:404px;top:198px" width="9" height="6" viewBox="0 0 9 6"><path d="M0.3 0.9L4 4.4L7.7 0.9" fill="none" stroke="#404040" stroke-width="1.2"/></svg>
<svg style="left:419px;top:191px" width="18" height="17" viewBox="0 0 18 17" shape-rendering="crispEdges"><rect x="5" y="12" width="2" height="1" fill="#8a8a8a"/><rect x="11" y="12" width="4" height="1" fill="#8a8a8a"/><rect x="11" y="16" width="2" height="1" fill="#8a8a8a"/><rect x="7" y="13" width="1" height="1" fill="#8a8a8a"/><rect x="11" y="13" width="2" height="1" fill="#8a8a8a"/><rect x="13" y="10" width="4" height="1" fill="#8a8a8a"/><rect x="11" y="14" width="2" height="1" fill="#8a8a8a"/><rect x="4" y="11" width="1" height="1" fill="#8a8a8a"/><rect x="11" y="11" width="5" height="1" fill="#8a8a8a"/><rect x="10" y="15" width="3" height="1" fill="#8a8a8a"/><rect x="15" y="7" width="3" height="1" fill="#8a8a8a"/><rect x="15" y="8" width="3" height="1" fill="#8a8a8a"/><rect x="14" y="9" width="3" height="1" fill="#8a8a8a"/><rect x="15" y="4" width="1" height="1" fill="#8a8a8a"/><rect x="16" y="6" width="1" height="1" fill="#8a8a8a"/><rect x="16" y="5" width="1" height="1" fill="#8a8a8a"/><rect x="2" y="4" width="12" height="1" fill="#fff"/><rect x="3" y="9" width="10" height="1" fill="#fff"/><rect x="5" y="1" width="6" height="1" fill="#fff"/><rect x="5" y="10" width="6" height="1" fill="#fff"/><rect x="1" y="6" width="14" height="1" fill="#fff"/><rect x="2" y="8" width="12" height="1" fill="#fff"/><rect x="1" y="5" width="14" height="1" fill="#fff"/><rect x="3" y="2" width="10" height="1" fill="#fff"/><rect x="2" y="3" width="12" height="1" fill="#fff"/><rect x="7" y="11" width="3" height="1" fill="#fff"/><rect x="2" y="7" width="12" height="1" fill="#fff"/><rect x="8" y="12" width="2" height="1" fill="#fff"/><rect x="9" y="13" width="1" height="1" fill="#fff"/><rect x="3" y="1" width="2" height="1" fill="#000"/><rect x="11" y="1" width="2" height="1" fill="#000"/><rect x="1" y="4" width="1" height="1" fill="#000"/><rect x="14" y="4" width="1" height="1" fill="#000"/><rect x="1" y="7" width="1" height="1" fill="#000"/><rect x="14" y="7" width="1" height="1" fill="#000"/><rect x="3" y="10" width="2" height="1" fill="#000"/><rect x="11" y="10" width="2" height="1" fill="#000"/><rect x="5" y="0" width="6" height="1" fill="#000"/><rect x="0" y="5" width="1" height="1" fill="#000"/><rect x="15" y="5" width="1" height="1" fill="#000"/><rect x="2" y="2" width="1" height="1" fill="#000"/><rect x="13" y="2" width="1" height="1" fill="#000"/><rect x="9" y="14" width="2" height="1" fill="#000"/><rect x="1" y="3" width="1" height="1" fill="#000"/><rect x="14" y="3" width="1" height="1" fill="#000"/><rect x="7" y="12" width="1" height="1" fill="#000"/><rect x="10" y="12" width="1" height="1" fill="#000"/><rect x="5" y="11" width="2" height="1" fill="#000"/><rect x="10" y="11" width="1" height="1" fill="#000"/><rect x="1" y="8" width="1" height="1" fill="#000"/><rect x="14" y="8" width="1" height="1" fill="#000"/><rect x="0" y="6" width="1" height="1" fill="#000"/><rect x="15" y="6" width="1" height="1" fill="#000"/><rect x="8" y="13" width="1" height="1" fill="#000"/><rect x="10" y="13" width="1" height="1" fill="#000"/><rect x="2" y="9" width="1" height="1" fill="#000"/><rect x="13" y="9" width="1" height="1" fill="#000"/><rect x="6" y="5" width="4" height="1" fill="#0000ff"/><rect x="7" y="3" width="2" height="1" fill="#0000ff"/><rect x="6" y="9" width="5" height="1" fill="#0000ff"/><rect x="7" y="8" width="3" height="1" fill="#0000ff"/><rect x="7" y="6" width="3" height="1" fill="#0000ff"/><rect x="7" y="7" width="3" height="1" fill="#0000ff"/><rect x="7" y="2" width="2" height="1" fill="#0000ff"/></svg>
<div class="chkd" style="left:439px;top:193px"></div>
<div class="t" style="left:454px;top:194px;letter-spacing:-0.167px;color:#6d6d6d">Рамки страниц</div>
<div class="t" style="left:249px;top:217px;letter-spacing:0.067px;color:#6d6d6d">Порядок страниц:</div>
<div class="cmb" style="left:250px;top:232px;width:167px;height:21px;background:#cccccc;border-color:#bfbfbf"></div>
<div class="t" style="left:253px;top:237px;letter-spacing:-0.059px;color:#6d6d6d">Вправо, затем вниз</div>
<svg style="left:404px;top:240px" width="9" height="6" viewBox="0 0 9 6"><path d="M0.3 0.9L4 4.4L7.7 0.9" fill="none" stroke="#bfbfbf" stroke-width="1.2"/></svg>
<svg style="left:230px;top:233px" width="18" height="17" viewBox="0 0 18 17" shape-rendering="crispEdges"><rect x="5" y="12" width="2" height="1" fill="#8a8a8a"/><rect x="11" y="12" width="4" height="1" fill="#8a8a8a"/><rect x="11" y="16" width="2" height="1" fill="#8a8a8a"/><rect x="7" y="13" width="1" height="1" fill="#8a8a8a"/><rect x="11" y="13" width="2" height="1" fill="#8a8a8a"/><rect x="13" y="10" width="4" height="1" fill="#8a8a8a"/><rect x="11" y="14" width="2" height="1" fill="#8a8a8a"/><rect x="4" y="11" width="1" height="1" fill="#8a8a8a"/><rect x="11" y="11" width="5" height="1" fill="#8a8a8a"/><rect x="10" y="15" width="3" height="1" fill="#8a8a8a"/><rect x="15" y="7" width="3" height="1" fill="#8a8a8a"/><rect x="15" y="8" width="3" height="1" fill="#8a8a8a"/><rect x="14" y="9" width="3" height="1" fill="#8a8a8a"/><rect x="15" y="4" width="1" height="1" fill="#8a8a8a"/><rect x="16" y="6" width="1" height="1" fill="#8a8a8a"/><rect x="16" y="5" width="1" height="1" fill="#8a8a8a"/><rect x="2" y="4" width="12" height="1" fill="#fff"/><rect x="3" y="9" width="10" height="1" fill="#fff"/><rect x="5" y="1" width="6" height="1" fill="#fff"/><rect x="5" y="10" width="6" height="1" fill="#fff"/><rect x="1" y="6" width="14" height="1" fill="#fff"/><rect x="2" y="8" width="12" height="1" fill="#fff"/><rect x="1" y="5" width="14" height="1" fill="#fff"/><rect x="3" y="2" width="10" height="1" fill="#fff"/><rect x="2" y="3" width="12" height="1" fill="#fff"/><rect x="7" y="11" width="3" height="1" fill="#fff"/><rect x="2" y="7" width="12" height="1" fill="#fff"/><rect x="8" y="12" width="2" height="1" fill="#fff"/><rect x="9" y="13" width="1" height="1" fill="#fff"/><rect x="3" y="1" width="2" height="1" fill="#000"/><rect x="11" y="1" width="2" height="1" fill="#000"/><rect x="1" y="4" width="1" height="1" fill="#000"/><rect x="14" y="4" width="1" height="1" fill="#000"/><rect x="1" y="7" width="1" height="1" fill="#000"/><rect x="14" y="7" width="1" height="1" fill="#000"/><rect x="3" y="10" width="2" height="1" fill="#000"/><rect x="11" y="10" width="2" height="1" fill="#000"/><rect x="5" y="0" width="6" height="1" fill="#000"/><rect x="0" y="5" width="1" height="1" fill="#000"/><rect x="15" y="5" width="1" height="1" fill="#000"/><rect x="2" y="2" width="1" height="1" fill="#000"/><rect x="13" y="2" width="1" height="1" fill="#000"/><rect x="9" y="14" width="2" height="1" fill="#000"/><rect x="1" y="3" width="1" height="1" fill="#000"/><rect x="14" y="3" width="1" height="1" fill="#000"/><rect x="7" y="12" width="1" height="1" fill="#000"/><rect x="10" y="12" width="1" height="1" fill="#000"/><rect x="5" y="11" width="2" height="1" fill="#000"/><rect x="10" y="11" width="1" height="1" fill="#000"/><rect x="1" y="8" width="1" height="1" fill="#000"/><rect x="14" y="8" width="1" height="1" fill="#000"/><rect x="0" y="6" width="1" height="1" fill="#000"/><rect x="15" y="6" width="1" height="1" fill="#000"/><rect x="8" y="13" width="1" height="1" fill="#000"/><rect x="10" y="13" width="1" height="1" fill="#000"/><rect x="2" y="9" width="1" height="1" fill="#000"/><rect x="13" y="9" width="1" height="1" fill="#000"/><rect x="6" y="5" width="4" height="1" fill="#0000ff"/><rect x="7" y="3" width="2" height="1" fill="#0000ff"/><rect x="6" y="9" width="5" height="1" fill="#0000ff"/><rect x="7" y="8" width="3" height="1" fill="#0000ff"/><rect x="7" y="6" width="3" height="1" fill="#0000ff"/><rect x="7" y="7" width="3" height="1" fill="#0000ff"/><rect x="7" y="2" width="2" height="1" fill="#0000ff"/></svg>
<div class="t" style="left:250px;top:259px;letter-spacing:0.286px">Дуплекс:</div>
<div class="cmb" style="left:250px;top:275px;width:167px;height:21px"></div>
<div class="t" style="left:253px;top:280px;letter-spacing:0.0px">Выкл.</div>
<svg style="left:404px;top:283px" width="9" height="6" viewBox="0 0 9 6"><path d="M0.3 0.9L4 4.4L7.7 0.9" fill="none" stroke="#404040" stroke-width="1.2"/></svg>
<div class="chk" style="left:250px;top:336px"></div>
<div class="t" style="left:265px;top:337px;letter-spacing:0.0px">Игнор. Сортир.в приложении</div>
<div class="chk" style="left:439px;top:336px"></div>
<div class="t" style="left:454px;top:337px;letter-spacing:0.167px">Не печатать пустые стр-цы</div>
<svg style="left:188px;top:381px" width="18" height="17" viewBox="0 0 18 17" shape-rendering="crispEdges"><rect x="5" y="12" width="2" height="1" fill="#8a8a8a"/><rect x="11" y="12" width="4" height="1" fill="#8a8a8a"/><rect x="11" y="16" width="2" height="1" fill="#8a8a8a"/><rect x="7" y="13" width="1" height="1" fill="#8a8a8a"/><rect x="11" y="13" width="2" height="1" fill="#8a8a8a"/><rect x="13" y="10" width="4" height="1" fill="#8a8a8a"/><rect x="11" y="14" width="2" height="1" fill="#8a8a8a"/><rect x="4" y="11" width="1" height="1" fill="#8a8a8a"/><rect x="11" y="11" width="5" height="1" fill="#8a8a8a"/><rect x="10" y="15" width="3" height="1" fill="#8a8a8a"/><rect x="15" y="7" width="3" height="1" fill="#8a8a8a"/><rect x="15" y="8" width="3" height="1" fill="#8a8a8a"/><rect x="14" y="9" width="3" height="1" fill="#8a8a8a"/><rect x="15" y="4" width="1" height="1" fill="#8a8a8a"/><rect x="16" y="6" width="1" height="1" fill="#8a8a8a"/><rect x="16" y="5" width="1" height="1" fill="#8a8a8a"/><rect x="2" y="4" width="12" height="1" fill="#fff"/><rect x="3" y="9" width="10" height="1" fill="#fff"/><rect x="5" y="1" width="6" height="1" fill="#fff"/><rect x="5" y="10" width="6" height="1" fill="#fff"/><rect x="1" y="6" width="14" height="1" fill="#fff"/><rect x="2" y="8" width="12" height="1" fill="#fff"/><rect x="1" y="5" width="14" height="1" fill="#fff"/><rect x="3" y="2" width="10" height="1" fill="#fff"/><rect x="2" y="3" width="12" height="1" fill="#fff"/><rect x="7" y="11" width="3" height="1" fill="#fff"/><rect x="2" y="7" width="12" height="1" fill="#fff"/><rect x="8" y="12" width="2" height="1" fill="#fff"/><rect x="9" y="13" width="1" height="1" fill="#fff"/><rect x="3" y="1" width="2" height="1" fill="#000"/><rect x="11" y="1" width="2" height="1" fill="#000"/><rect x="1" y="4" width="1" height="1" fill="#000"/><rect x="14" y="4" width="1" height="1" fill="#000"/><rect x="1" y="7" width="1" height="1" fill="#000"/><rect x="14" y="7" width="1" height="1" fill="#000"/><rect x="3" y="10" width="2" height="1" fill="#000"/><rect x="11" y="10" width="2" height="1" fill="#000"/><rect x="5" y="0" width="6" height="1" fill="#000"/><rect x="0" y="5" width="1" height="1" fill="#000"/><rect x="15" y="5" width="1" height="1" fill="#000"/><rect x="2" y="2" width="1" height="1" fill="#000"/><rect x="13" y="2" width="1" height="1" fill="#000"/><rect x="9" y="14" width="2" height="1" fill="#000"/><rect x="1" y="3" width="1" height="1" fill="#000"/><rect x="14" y="3" width="1" height="1" fill="#000"/><rect x="7" y="12" width="1" height="1" fill="#000"/><rect x="10" y="12" width="1" height="1" fill="#000"/><rect x="5" y="11" width="2" height="1" fill="#000"/><rect x="10" y="11" width="1" height="1" fill="#000"/><rect x="1" y="8" width="1" height="1" fill="#000"/><rect x="14" y="8" width="1" height="1" fill="#000"/><rect x="0" y="6" width="1" height="1" fill="#000"/><rect x="15" y="6" width="1" height="1" fill="#000"/><rect x="8" y="13" width="1" height="1" fill="#000"/><rect x="10" y="13" width="1" height="1" fill="#000"/><rect x="2" y="9" width="1" height="1" fill="#000"/><rect x="13" y="9" width="1" height="1" fill="#000"/><rect x="6" y="5" width="4" height="1" fill="#0000ff"/><rect x="7" y="3" width="2" height="1" fill="#0000ff"/><rect x="6" y="9" width="5" height="1" fill="#0000ff"/><rect x="7" y="8" width="3" height="1" fill="#0000ff"/><rect x="7" y="6" width="3" height="1" fill="#0000ff"/><rect x="7" y="7" width="3" height="1" fill="#0000ff"/><rect x="7" y="2" width="2" height="1" fill="#0000ff"/></svg>
<div class="chkd" style="left:209px;top:383px"></div>
<div class="t" style="left:224px;top:384px;letter-spacing:0.118px;color:#6d6d6d">Блокированн.печать</div>
<div class="t" style="left:349px;top:384px;letter-spacing:-0.02px;color:#9d9d9d">ИД пользователя: (1 - 9 алфавитно-цифровых символов)</div>
<svg style="left:330px;top:401px" width="18" height="17" viewBox="0 0 18 17" shape-rendering="crispEdges"><rect x="5" y="12" width="2" height="1" fill="#8a8a8a"/><rect x="11" y="12" width="4" height="1" fill="#8a8a8a"/><rect x="11" y="16" width="2" height="1" fill="#8a8a8a"/><rect x="7" y="13" width="1" height="1" fill="#8a8a8a"/><rect x="11" y="13" width="2" height="1" fill="#8a8a8a"/><rect x="13" y="10" width="4" height="1" fill="#8a8a8a"/><rect x="11" y="14" width="2" height="1" fill="#8a8a8a"/><rect x="4" y="11" width="1" height="1" fill="#8a8a8a"/><rect x="11" y="11" width="5" height="1" fill="#8a8a8a"/><rect x="10" y="15" width="3" height="1" fill="#8a8a8a"/><rect x="15" y="7" width="3" height="1" fill="#8a8a8a"/><rect x="15" y="8" width="3" height="1" fill="#8a8a8a"/><rect x="14" y="9" width="3" height="1" fill="#8a8a8a"/><rect x="15" y="4" width="1" height="1" fill="#8a8a8a"/><rect x="16" y="6" width="1" height="1" fill="#8a8a8a"/><rect x="16" y="5" width="1" height="1" fill="#8a8a8a"/><rect x="2" y="4" width="12" height="1" fill="#fff"/><rect x="3" y="9" width="10" height="1" fill="#fff"/><rect x="5" y="1" width="6" height="1" fill="#fff"/><rect x="5" y="10" width="6" height="1" fill="#fff"/><rect x="1" y="6" width="14" height="1" fill="#fff"/><rect x="2" y="8" width="12" height="1" fill="#fff"/><rect x="1" y="5" width="14" height="1" fill="#fff"/><rect x="3" y="2" width="10" height="1" fill="#fff"/><rect x="2" y="3" width="12" height="1" fill="#fff"/><rect x="7" y="11" width="3" height="1" fill="#fff"/><rect x="2" y="7" width="12" height="1" fill="#fff"/><rect x="8" y="12" width="2" height="1" fill="#fff"/><rect x="9" y="13" width="1" height="1" fill="#fff"/><rect x="3" y="1" width="2" height="1" fill="#000"/><rect x="11" y="1" width="2" height="1" fill="#000"/><rect x="1" y="4" width="1" height="1" fill="#000"/><rect x="14" y="4" width="1" height="1" fill="#000"/><rect x="1" y="7" width="1" height="1" fill="#000"/><rect x="14" y="7" width="1" height="1" fill="#000"/><rect x="3" y="10" width="2" height="1" fill="#000"/><rect x="11" y="10" width="2" height="1" fill="#000"/><rect x="5" y="0" width="6" height="1" fill="#000"/><rect x="0" y="5" width="1" height="1" fill="#000"/><rect x="15" y="5" width="1" height="1" fill="#000"/><rect x="2" y="2" width="1" height="1" fill="#000"/><rect x="13" y="2" width="1" height="1" fill="#000"/><rect x="9" y="14" width="2" height="1" fill="#000"/><rect x="1" y="3" width="1" height="1" fill="#000"/><rect x="14" y="3" width="1" height="1" fill="#000"/><rect x="7" y="12" width="1" height="1" fill="#000"/><rect x="10" y="12" width="1" height="1" fill="#000"/><rect x="5" y="11" width="2" height="1" fill="#000"/><rect x="10" y="11" width="1" height="1" fill="#000"/><rect x="1" y="8" width="1" height="1" fill="#000"/><rect x="14" y="8" width="1" height="1" fill="#000"/><rect x="0" y="6" width="1" height="1" fill="#000"/><rect x="15" y="6" width="1" height="1" fill="#000"/><rect x="8" y="13" width="1" height="1" fill="#000"/><rect x="10" y="13" width="1" height="1" fill="#000"/><rect x="2" y="9" width="1" height="1" fill="#000"/><rect x="13" y="9" width="1" height="1" fill="#000"/><rect x="6" y="5" width="4" height="1" fill="#0000ff"/><rect x="7" y="3" width="2" height="1" fill="#0000ff"/><rect x="6" y="9" width="5" height="1" fill="#0000ff"/><rect x="7" y="8" width="3" height="1" fill="#0000ff"/><rect x="7" y="6" width="3" height="1" fill="#0000ff"/><rect x="7" y="7" width="3" height="1" fill="#0000ff"/><rect x="7" y="2" width="2" height="1" fill="#0000ff"/></svg>
<div class="a" style="left:350px;top:400px;width:147px;height:20px;border:1px solid #cccccc;background:#fff"></div>
<div class="t" style="left:349px;top:432px;letter-spacing:0.0px;color:#9d9d9d">Пароль: (от 4 до 8 цифр)</div>
<svg style="left:330px;top:448px" width="18" height="17" viewBox="0 0 18 17" shape-rendering="crispEdges"><rect x="5" y="12" width="2" height="1" fill="#8a8a8a"/><rect x="11" y="12" width="4" height="1" fill="#8a8a8a"/><rect x="11" y="16" width="2" height="1" fill="#8a8a8a"/><rect x="7" y="13" width="1" height="1" fill="#8a8a8a"/><rect x="11" y="13" width="2" height="1" fill="#8a8a8a"/><rect x="13" y="10" width="4" height="1" fill="#8a8a8a"/><rect x="11" y="14" width="2" height="1" fill="#8a8a8a"/><rect x="4" y="11" width="1" height="1" fill="#8a8a8a"/><rect x="11" y="11" width="5" height="1" fill="#8a8a8a"/><rect x="10" y="15" width="3" height="1" fill="#8a8a8a"/><rect x="15" y="7" width="3" height="1" fill="#8a8a8a"/><rect x="15" y="8" width="3" height="1" fill="#8a8a8a"/><rect x="14" y="9" width="3" height="1" fill="#8a8a8a"/><rect x="15" y="4" width="1" height="1" fill="#8a8a8a"/><rect x="16" y="6" width="1" height="1" fill="#8a8a8a"/><rect x="16" y="5" width="1" height="1" fill="#8a8a8a"/><rect x="2" y="4" width="12" height="1" fill="#fff"/><rect x="3" y="9" width="10" height="1" fill="#fff"/><rect x="5" y="1" width="6" height="1" fill="#fff"/><rect x="5" y="10" width="6" height="1" fill="#fff"/><rect x="1" y="6" width="14" height="1" fill="#fff"/><rect x="2" y="8" width="12" height="1" fill="#fff"/><rect x="1" y="5" width="14" height="1" fill="#fff"/><rect x="3" y="2" width="10" height="1" fill="#fff"/><rect x="2" y="3" width="12" height="1" fill="#fff"/><rect x="7" y="11" width="3" height="1" fill="#fff"/><rect x="2" y="7" width="12" height="1" fill="#fff"/><rect x="8" y="12" width="2" height="1" fill="#fff"/><rect x="9" y="13" width="1" height="1" fill="#fff"/><rect x="3" y="1" width="2" height="1" fill="#000"/><rect x="11" y="1" width="2" height="1" fill="#000"/><rect x="1" y="4" width="1" height="1" fill="#000"/><rect x="14" y="4" width="1" height="1" fill="#000"/><rect x="1" y="7" width="1" height="1" fill="#000"/><rect x="14" y="7" width="1" height="1" fill="#000"/><rect x="3" y="10" width="2" height="1" fill="#000"/><rect x="11" y="10" width="2" height="1" fill="#000"/><rect x="5" y="0" width="6" height="1" fill="#000"/><rect x="0" y="5" width="1" height="1" fill="#000"/><rect x="15" y="5" width="1" height="1" fill="#000"/><rect x="2" y="2" width="1" height="1" fill="#000"/><rect x="13" y="2" width="1" height="1" fill="#000"/><rect x="9" y="14" width="2" height="1" fill="#000"/><rect x="1" y="3" width="1" height="1" fill="#000"/><rect x="14" y="3" width="1" height="1" fill="#000"/><rect x="7" y="12" width="1" height="1" fill="#000"/><rect x="10" y="12" width="1" height="1" fill="#000"/><rect x="5" y="11" width="2" height="1" fill="#000"/><rect x="10" y="11" width="1" height="1" fill="#000"/><rect x="1" y="8" width="1" height="1" fill="#000"/><rect x="14" y="8" width="1" height="1" fill="#000"/><rect x="0" y="6" width="1" height="1" fill="#000"/><rect x="15" y="6" width="1" height="1" fill="#000"/><rect x="8" y="13" width="1" height="1" fill="#000"/><rect x="10" y="13" width="1" height="1" fill="#000"/><rect x="2" y="9" width="1" height="1" fill="#000"/><rect x="13" y="9" width="1" height="1" fill="#000"/><rect x="6" y="5" width="4" height="1" fill="#0000ff"/><rect x="7" y="3" width="2" height="1" fill="#0000ff"/><rect x="6" y="9" width="5" height="1" fill="#0000ff"/><rect x="7" y="8" width="3" height="1" fill="#0000ff"/><rect x="7" y="6" width="3" height="1" fill="#0000ff"/><rect x="7" y="7" width="3" height="1" fill="#0000ff"/><rect x="7" y="2" width="2" height="1" fill="#0000ff"/></svg>
<div class="a" style="left:350px;top:447px;width:147px;height:20px;border:1px solid #cccccc;background:#fff"></div>
<svg style="left:18px;top:488px" width="34" height="35" viewBox="18 488 34 35" shape-rendering="crispEdges"><path d="M23 490H36V509H22V508H21V492H22V491H23Z" fill="#b8b8b8"/><rect x="22" y="492" width="6" height="8" fill="#fffcf0"/><rect x="28" y="492" width="4" height="8" fill="#d6d6d6"/><rect x="32" y="491" width="4" height="9" fill="#a6a6a6"/><rect x="23" y="492" width="3" height="2" fill="#20e0f0"/><rect x="28" y="492" width="3" height="2" fill="#20e0f0"/><rect x="23" y="490" width="13" height="1" fill="#8a8a8a"/><rect x="22" y="491" width="1" height="1" fill="#8a8a8a"/><rect x="21" y="492" width="1" height="16" fill="#7a7a7a"/><rect x="35" y="490" width="1" height="10" fill="#7a7a7a"/><rect x="21" y="500" width="11" height="1" fill="#5a5a5a"/><rect x="27" y="500" width="2" height="1" fill="#202080"/><rect x="22" y="501" width="10" height="7" fill="#f4f4f4"/><rect x="23" y="503" width="8" height="1" fill="#707070"/><rect x="23" y="505" width="8" height="2" fill="#505050"/><rect x="26" y="503" width="2" height="4" fill="#000"/><rect x="22" y="508" width="9" height="1" fill="#303030"/><rect x="26" y="509" width="1" height="6" fill="#2a7af0"/><rect x="27" y="509" width="1" height="7" fill="#101040"/><rect x="20" y="514" width="12" height="2" fill="#2848e0"/><rect x="25" y="513" width="3" height="4" fill="#1890f0"/><rect x="27" y="514" width="1" height="2" fill="#101080"/><rect x="49" y="500" width="2" height="17" fill="#30307a"/><rect x="32" y="499" width="17" height="17" fill="#e4e4dc"/><rect x="32" y="499" width="17" height="1" fill="#8a8a8a"/><rect x="31" y="500" width="1" height="15" fill="#a0a0a0"/><rect x="47" y="500" width="1" height="15" fill="#c0c0b8"/><rect x="48" y="500" width="1" height="16" fill="#909090"/><rect x="33" y="501" width="14" height="13" fill="#5a5af0"/><rect x="34" y="502" width="3" height="1" fill="#e0e0ff"/><rect x="34" y="503" width="2" height="1" fill="#c0c0ff"/><rect x="34" y="504" width="1" height="1" fill="#a8a8ff"/><rect x="38" y="503" width="1" height="1" fill="#9a9aff"/><rect x="37" y="504" width="1" height="1" fill="#9a9aff"/><rect x="36" y="505" width="2" height="1" fill="#8a8aff"/><rect x="35" y="506" width="1" height="1" fill="#8a8aff"/><rect x="40" y="503" width="1" height="1" fill="#8080ff"/><rect x="39" y="505" width="1" height="1" fill="#8080ff"/><rect x="37" y="507" width="1" height="1" fill="#8080ff"/><rect x="33" y="514" width="15" height="1" fill="#f0f0e8"/><rect x="32" y="515" width="17" height="1" fill="#7a7a7a"/><path d="M35 516H45L47 521H33Z" fill="#f2f2ea"/><rect x="34" y="516" width="1" height="2" fill="#404040"/><rect x="33" y="518" width="1" height="3" fill="#404040"/><rect x="33" y="521" width="15" height="1" fill="#30307a"/><rect x="46" y="516" width="1" height="5" fill="#30307a"/><rect x="45" y="518" width="2" height="1" fill="#202060"/></svg>
<div class="btn" style="left:57px;top:497px;width:192px;height:21px"></div>
<div class="t" style="left:84px;top:502px;letter-spacing:0.038px">Smart Organizing Monitor...</div>
<div class="btn" style="left:351px;top:497px;width:145px;height:21px"></div>
<div class="t" style="left:385px;top:502px;letter-spacing:-0.154px">О программе...</div>
<div class="btn" style="left:504px;top:497px;width:145px;height:21px"></div>
<div class="t" style="left:529px;top:502px;letter-spacing:0.133px">Исходн. значения</div>
<div class="btn" style="left:351px;top:544px;width:73px;height:21px;border:2px solid #0078d7"></div>
<div class="t" style="left:379px;top:549px;letter-spacing:-0.5px">OK</div>
<div class="btn" style="left:432px;top:544px;width:73px;height:21px"></div>
<div class="t" style="left:449px;top:549px;letter-spacing:-0.4px">Отмена</div>
<div class="btn" style="left:513px;top:544px;width:73px;height:21px;background:#cccccc;border-color:#bfbfbf"></div>
<div class="t" style="left:521px;top:549px;letter-spacing:-0.25px;color:#838383">Применить</div>
<div class="btn" style="left:594px;top:544px;width:73px;height:21px"></div>
<div class="t" style="left:607px;top:549px;letter-spacing:0.167px">Справка</div>
</body></html>
